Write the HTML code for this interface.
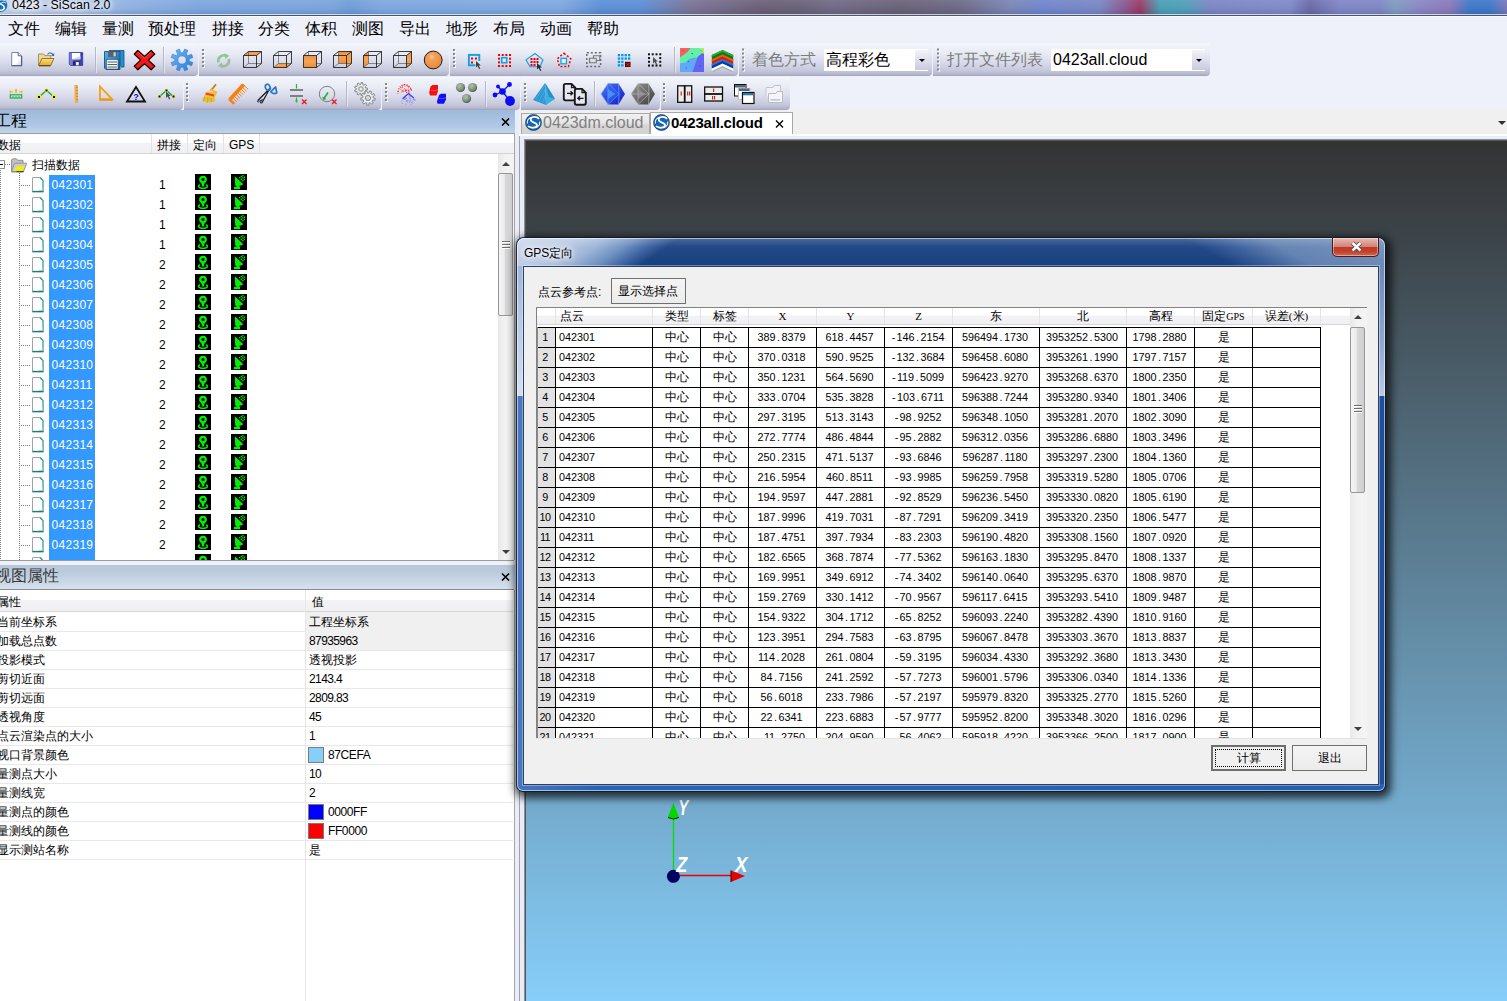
<!DOCTYPE html><html><head><meta charset="utf-8"><title>0423 - SiScan 2.0</title><style>
*{box-sizing:border-box;margin:0;padding:0}
html,body{width:1507px;height:1001px;overflow:hidden;background:#eef0fa;font-family:"Liberation Sans",sans-serif;font-size:12px;color:#000}
.abs{position:absolute}
div,span,svg{position:absolute}
.t{white-space:nowrap;line-height:1}
/* title */
#title{left:0;top:0;width:1507px;height:15px;background:linear-gradient(90deg,#c9d6ec 0px,#b4c7e6 60px,#8fb0e2 130px,#7da6de 200px,#7aa4dd 330px,#6f9cd8 350px,#7ea7de 380px,#80a8df 560px,#5d8fd6 600px,#5d8fd6 640px,#7a7596 690px,#6c6078 760px,#6a6279 800px,#706a86 830px,#6a6278 900px,#6d6a86 960px,#7a86b4 1010px,#6f86cc 1040px,#7a86c4 1100px,#8a5a90 1125px,#9a3a66 1140px,#4a9fb4 1160px,#4f9fb8 1185px,#7c86c4 1210px,#7f8ac8 1290px,#6a6aa8 1310px,#7f86c6 1340px,#8086c4 1380px,#7f9cc0 1395px,#8b86c4 1420px,#8a78b8 1450px,#3f78c8 1470px,#3f78c8 1490px,#7a78b8 1507px)}
#title:after{content:"";position:absolute;left:0;top:0;width:100%;height:14px;background:linear-gradient(180deg,rgba(255,255,255,.08),rgba(255,255,255,0) 60%,rgba(0,0,0,.10))}
#tline0{left:0;top:14px;width:1507px;height:1px;background:rgba(235,240,250,.75)}
#tline{left:0;top:15px;width:1507px;height:1px;background:#4a566c}
#tline2{left:0;top:16px;width:1507px;height:1px;background:#fafbff}
.menu{top:21px;font-size:16px;line-height:16px;white-space:nowrap;letter-spacing:0}
/* toolbars */
.tbg{background:linear-gradient(180deg,#f4f6fc 0%,#e9ebf5 30%,#d9dcea 58%,#c5c8db 84%,#b6b9ce 94%,#9fa2bb 100%);border-radius:0 0 4px 0}
.grip{width:2px;background-image:linear-gradient(180deg,#85858c 0,#85858c 2px,transparent 2px,transparent 4px);background-size:2px 4px;background-repeat:repeat-y}
.grip:after{content:"";position:absolute;left:1px;top:1px;width:2px;height:100%;background-image:linear-gradient(180deg,#fff 0,#fff 2px,transparent 2px,transparent 4px);background-size:2px 4px;background-repeat:repeat-y;z-index:-1}
.sep{width:1px;background:#b7b8c4}
.sep:after{content:"";position:absolute;left:1px;top:0;width:1px;height:100%;background:rgba(255,255,255,.45)}
.combo{background:#fff;height:22px;top:49px}
.cbtn{top:1px;width:13px;height:20px;background:linear-gradient(180deg,#f2f3fa,#c9cbdd);}
.cbtn:after{content:"";position:absolute;left:4px;top:9px;border-left:3px solid transparent;border-right:3px solid transparent;border-top:3px solid #000}
/* dock */
.dockhdr{left:0;width:515px;background:linear-gradient(180deg,#9fb9da 0%,#a5bfdf 30%,#b1c9e5 72%,#c1d4ea 100%)}
.hx{width:9px;height:8px}
.lvh{background:linear-gradient(180deg,#fff 0%,#fff 45%,#f3f3f5 50%,#f0f0f2 100%)}
.row-sel{left:49px;width:46px;height:20px;background:#3399ff}
.rt{font-size:12px;line-height:12px;white-space:nowrap}
.sbtrack{background:linear-gradient(90deg,#e8e8e8,#f2f2f2 40%,#f4f4f4)}
.thumb{border:1px solid #979797;border-radius:2px;background:linear-gradient(90deg,#f4f4f4 0%,#ededed 40%,#d8d8da 50%,#cfcfd1 100%)}
.gripm{width:8px;height:1px;background:#6e6e6e;box-shadow:0 1px 0 #fff}
.c{font-family:"Liberation Sans",sans-serif;font-size:10.8px;line-height:11px;white-space:nowrap;text-align:center}.c i{display:inline-block;position:static;width:6px;text-align:center;font-style:normal}.ls{font-family:"Liberation Serif",serif;font-size:11px}</style></head><body><div id="title"></div><div id="tline0"></div><div id="tline"></div><div id="tline2"></div><svg style="left:-7px;top:-2px" width="15" height="15" viewBox="0 0 15 15"><circle cx="7.500" cy="7.200" r="6.800" fill="#1470c0"/><path d="M11.800 2.500c-2-2-6.500-1-6 1.500s5.500 2.500 5.500 5.500-4.500 3.500-7 1.500" fill="none" stroke="#fff" stroke-width="1.500"/><path d="M12.800 5c-1.500-1-3.500-1-4.500 0" fill="none" stroke="#fff" stroke-width="1"/></svg><div class="t" style="left:12px;top:-2px;font-size:12.4px;line-height:14px;text-shadow:0 0 6px #fff,0 0 4px #fff,0 0 9px #fff">0423 - SiScan 2.0</div><div class="menu" style="left:8px">文件</div><div class="menu" style="left:55px">编辑</div><div class="menu" style="left:102px">量测</div><div class="menu" style="left:148px">预处理</div><div class="menu" style="left:212px">拼接</div><div class="menu" style="left:258px">分类</div><div class="menu" style="left:305px">体积</div><div class="menu" style="left:352px">测图</div><div class="menu" style="left:399px">导出</div><div class="menu" style="left:446px">地形</div><div class="menu" style="left:493px">布局</div><div class="menu" style="left:540px">动画</div><div class="menu" style="left:587px">帮助</div><div class="tbg" style="left:0px;top:43px;width:198px;height:33px"></div><div class="tbg" style="left:199px;top:43px;width:250px;height:33px"></div><div class="tbg" style="left:450px;top:43px;width:288px;height:33px"></div><div class="tbg" style="left:739px;top:43px;width:193px;height:33px"></div><div class="tbg" style="left:933px;top:43px;width:277px;height:33px"></div><div class="tbg" style="left:0px;top:77px;width:183px;height:33px"></div><div class="tbg" style="left:184px;top:77px;width:197px;height:33px"></div><div class="tbg" style="left:382px;top:77px;width:138px;height:33px"></div><div class="tbg" style="left:521px;top:77px;width:139px;height:33px"></div><div class="tbg" style="left:661px;top:77px;width:129px;height:33px"></div><div class="sep" style="left:95px;top:47px;height:26px"></div><div class="sep" style="left:163px;top:47px;height:26px"></div><div class="sep" style="left:674px;top:47px;height:26px"></div><div class="sep" style="left:346px;top:81px;height:26px"></div><div class="sep" style="left:485px;top:81px;height:26px"></div><div class="sep" style="left:594px;top:81px;height:26px"></div><div class="t" style="left:752px;top:52px;font-size:16px;color:#7d7d7d">着色方式</div><div class="combo" style="left:824px;width:104px"><div class="t" style="left:2px;top:3px;font-size:16px">高程彩色</div><div class="cbtn" style="left:91px"></div></div><div class="t" style="left:947px;top:52px;font-size:16px;color:#7d7d7d">打开文件列表</div><div class="combo" style="left:1051px;width:154px"><div class="t" style="left:2px;top:3px;font-size:16px">0423all.cloud</div><div class="cbtn" style="left:141px"></div></div><svg style="left:0;top:42px" width="1507" height="70" viewBox="0 42 1507 70"><defs><linearGradient id="og" x1="0" y1="0" x2="0" y2="1"><stop offset="0" stop-color="#f09038"/><stop offset=".5" stop-color="#f4a458"/><stop offset="1" stop-color="#ee8c30"/></linearGradient><radialGradient id="sg" cx=".42" cy=".32" r=".7"><stop offset="0" stop-color="#fbc898"/><stop offset=".25" stop-color="#f4a058"/><stop offset="1" stop-color="#e88838"/></radialGradient><linearGradient id="fg" x1="0" y1="0" x2="1" y2="1"><stop offset="0" stop-color="#fff"/><stop offset=".6" stop-color="#fff"/><stop offset="1" stop-color="#c8d0e8"/></linearGradient><linearGradient id="sv" x1="0" y1="0" x2="1" y2="0"><stop offset="0" stop-color="#8a8ae6"/><stop offset=".5" stop-color="#5050c8"/><stop offset="1" stop-color="#3c3cae"/></linearGradient><linearGradient id="sa" x1="0" y1="0" x2="1" y2="1"><stop offset="0" stop-color="#58b8e8"/><stop offset=".5" stop-color="#2a86c4"/><stop offset="1" stop-color="#1a5c96"/></linearGradient><linearGradient id="fo" x1="0" y1="0" x2="0" y2="1"><stop offset="0" stop-color="#fbe08a"/><stop offset="1" stop-color="#eda820"/></linearGradient><linearGradient id="gr" x1="0" y1="0" x2="1" y2="1"><stop offset="0" stop-color="#6cb8f4"/><stop offset="1" stop-color="#2a7cd4"/></linearGradient><radialGradient id="gs" cx=".4" cy=".35" r=".7"><stop offset="0" stop-color="#c4c4c4"/><stop offset=".6" stop-color="#8a8a8a"/><stop offset="1" stop-color="#484848"/></radialGradient><linearGradient id="py" x1="0" y1="0" x2="1" y2="0"><stop offset="0" stop-color="#2c9ad8"/><stop offset=".55" stop-color="#48b4e4"/><stop offset="1" stop-color="#2890c8"/></linearGradient><linearGradient id="bp" x1="0" y1="0" x2="1" y2="1"><stop offset="0" stop-color="#4a7af0"/><stop offset=".5" stop-color="#2a48e0"/><stop offset="1" stop-color="#1818c8"/></linearGradient><linearGradient id="gp" x1="0" y1="0" x2="1" y2="1"><stop offset="0" stop-color="#9a9a9a"/><stop offset=".5" stop-color="#6a6a6a"/><stop offset="1" stop-color="#3c3c3c"/></linearGradient></defs><rect x="203" y="50" width="2" height="2" fill="#fff"/><rect x="202" y="49" width="2" height="2" fill="#85858e"/><rect x="203" y="54" width="2" height="2" fill="#fff"/><rect x="202" y="53" width="2" height="2" fill="#85858e"/><rect x="203" y="58" width="2" height="2" fill="#fff"/><rect x="202" y="57" width="2" height="2" fill="#85858e"/><rect x="203" y="62" width="2" height="2" fill="#fff"/><rect x="202" y="61" width="2" height="2" fill="#85858e"/><rect x="203" y="66" width="2" height="2" fill="#fff"/><rect x="202" y="65" width="2" height="2" fill="#85858e"/><rect x="454" y="50" width="2" height="2" fill="#fff"/><rect x="453" y="49" width="2" height="2" fill="#85858e"/><rect x="454" y="54" width="2" height="2" fill="#fff"/><rect x="453" y="53" width="2" height="2" fill="#85858e"/><rect x="454" y="58" width="2" height="2" fill="#fff"/><rect x="453" y="57" width="2" height="2" fill="#85858e"/><rect x="454" y="62" width="2" height="2" fill="#fff"/><rect x="453" y="61" width="2" height="2" fill="#85858e"/><rect x="454" y="66" width="2" height="2" fill="#fff"/><rect x="453" y="65" width="2" height="2" fill="#85858e"/><rect x="743" y="49.5" width="2" height="2" fill="#fff"/><rect x="742" y="48.5" width="2" height="2" fill="#85858e"/><rect x="743" y="53.5" width="2" height="2" fill="#fff"/><rect x="742" y="52.5" width="2" height="2" fill="#85858e"/><rect x="743" y="57.5" width="2" height="2" fill="#fff"/><rect x="742" y="56.5" width="2" height="2" fill="#85858e"/><rect x="743" y="61.5" width="2" height="2" fill="#fff"/><rect x="742" y="60.5" width="2" height="2" fill="#85858e"/><rect x="743" y="65.5" width="2" height="2" fill="#fff"/><rect x="742" y="64.5" width="2" height="2" fill="#85858e"/><rect x="743" y="69.5" width="2" height="2" fill="#fff"/><rect x="742" y="68.5" width="2" height="2" fill="#85858e"/><rect x="938" y="49.5" width="2" height="2" fill="#fff"/><rect x="937" y="48.5" width="2" height="2" fill="#85858e"/><rect x="938" y="53.5" width="2" height="2" fill="#fff"/><rect x="937" y="52.5" width="2" height="2" fill="#85858e"/><rect x="938" y="57.5" width="2" height="2" fill="#fff"/><rect x="937" y="56.5" width="2" height="2" fill="#85858e"/><rect x="938" y="61.5" width="2" height="2" fill="#fff"/><rect x="937" y="60.5" width="2" height="2" fill="#85858e"/><rect x="938" y="65.5" width="2" height="2" fill="#fff"/><rect x="937" y="64.5" width="2" height="2" fill="#85858e"/><rect x="938" y="69.5" width="2" height="2" fill="#fff"/><rect x="937" y="68.5" width="2" height="2" fill="#85858e"/><rect x="187" y="84" width="2" height="2" fill="#fff"/><rect x="186" y="83" width="2" height="2" fill="#85858e"/><rect x="187" y="88" width="2" height="2" fill="#fff"/><rect x="186" y="87" width="2" height="2" fill="#85858e"/><rect x="187" y="92" width="2" height="2" fill="#fff"/><rect x="186" y="91" width="2" height="2" fill="#85858e"/><rect x="187" y="96" width="2" height="2" fill="#fff"/><rect x="186" y="95" width="2" height="2" fill="#85858e"/><rect x="187" y="100" width="2" height="2" fill="#fff"/><rect x="186" y="99" width="2" height="2" fill="#85858e"/><rect x="386" y="84" width="2" height="2" fill="#fff"/><rect x="385" y="83" width="2" height="2" fill="#85858e"/><rect x="386" y="88" width="2" height="2" fill="#fff"/><rect x="385" y="87" width="2" height="2" fill="#85858e"/><rect x="386" y="92" width="2" height="2" fill="#fff"/><rect x="385" y="91" width="2" height="2" fill="#85858e"/><rect x="386" y="96" width="2" height="2" fill="#fff"/><rect x="385" y="95" width="2" height="2" fill="#85858e"/><rect x="386" y="100" width="2" height="2" fill="#fff"/><rect x="385" y="99" width="2" height="2" fill="#85858e"/><rect x="525" y="84" width="2" height="2" fill="#fff"/><rect x="524" y="83" width="2" height="2" fill="#85858e"/><rect x="525" y="88" width="2" height="2" fill="#fff"/><rect x="524" y="87" width="2" height="2" fill="#85858e"/><rect x="525" y="92" width="2" height="2" fill="#fff"/><rect x="524" y="91" width="2" height="2" fill="#85858e"/><rect x="525" y="96" width="2" height="2" fill="#fff"/><rect x="524" y="95" width="2" height="2" fill="#85858e"/><rect x="525" y="100" width="2" height="2" fill="#fff"/><rect x="524" y="99" width="2" height="2" fill="#85858e"/><rect x="664" y="84" width="2" height="2" fill="#fff"/><rect x="663" y="83" width="2" height="2" fill="#85858e"/><rect x="664" y="88" width="2" height="2" fill="#fff"/><rect x="663" y="87" width="2" height="2" fill="#85858e"/><rect x="664" y="92" width="2" height="2" fill="#fff"/><rect x="663" y="91" width="2" height="2" fill="#85858e"/><rect x="664" y="96" width="2" height="2" fill="#fff"/><rect x="663" y="95" width="2" height="2" fill="#85858e"/><rect x="664" y="100" width="2" height="2" fill="#fff"/><rect x="663" y="99" width="2" height="2" fill="#85858e"/><path d="M11.700 52.500h6.500l3.300 3.300v9.700h-9.800z" fill="url(#fg)" stroke="#7888a8" stroke-width="1"/><path d="M11.500 65.700h10.300M21.700 56v9.500" stroke="#48587a" stroke-width="1.100" fill="none"/><path d="M18.200 52.500v3.300h3.300" fill="#e8ecf6" stroke="#48587a" stroke-width=".9"/><path d="M38.500 65.300v-11.300h5l1.200 1.600h6v3.400" fill="#ecd898" stroke="#a08850" stroke-width=".9"/><path d="M38.700 65.500l3.200-7h12l-3.200 7z" fill="url(#fo)" stroke="#8a6a20" stroke-width=".9"/><path d="M39 65.800h11.500" stroke="#4a3a10" stroke-width="1"/><path d="M47.500 54.500c1.500-2.200 4-2.200 5.500.300" fill="none" stroke="#5078c0" stroke-width="1.200"/><path d="M54.300 53l-.3 3.300-3-.8z" fill="#3a62b0"/><path d="M69.300 52.500h13.400v13h-12.200l-1.200-1.200z" fill="url(#sv)" stroke="#3838a0" stroke-width=".8"/><rect x="72" y="53" width="8.300" height="6.300" fill="#fff"/><path d="M72 59.300h8.300v-3z" fill="#d0d4e8"/><rect x="73" y="61.300" width="6.500" height="4" fill="#26265a"/><rect x="75.800" y="62" width="3" height="3.300" fill="#f0f0f8"/><rect x="81.200" y="53.500" width=".9" height="1.200" fill="#26265a"/><path d="M109 50.500h15v16.500h-3" fill="#2a8ccc" stroke="#1a5c96" stroke-width=".9"/><path d="M104.500 51.500h15.500v18h-14l-1.500-1.500z" fill="url(#sa)" stroke="#1a5080" stroke-width=".9"/><rect x="108" y="51.500" width="9" height="5.500" fill="#5a6470"/><rect x="113.500" y="52.300" width="2.300" height="4" fill="#c8d0d8"/><rect x="106.500" y="59.500" width="11.500" height="9.500" fill="#f6f8fa" stroke="#1a5080" stroke-width=".6"/><path d="M107.500 62h9.500M107.500 64.500h9.500M107.500 67h9.500" stroke="#5a5a5a" stroke-width="1.200"/><path d="M137.800 50.500l6.700 6 6.700-6 3.600 3.600-6.400 6 6.400 6-3.600 3.600-6.700-6-6.700 6-3.600-3.600 6.400-6-6.400-6z" fill="#f01818" stroke="#180000" stroke-width="1.300" stroke-linejoin="round"/><path d="M137.800 52l6.700 6 6.700-6" stroke="#ff7070" stroke-width="1" fill="none" opacity=".7"/><path d="M189.23 61.03 L192.89 62.61 L191.55 65.85 L187.84 64.38 L186.38 65.84 L187.85 69.55 L184.61 70.89 L183.03 67.23 L180.97 67.23 L179.39 70.89 L176.15 69.55 L177.62 65.84 L176.16 64.38 L172.45 65.85 L171.11 62.61 L174.77 61.03 L174.77 58.97 L171.11 57.39 L172.45 54.15 L176.16 55.62 L177.62 54.16 L176.15 50.45 L179.39 49.11 L180.97 52.77 L183.03 52.77 L184.61 49.11 L187.85 50.45 L186.38 54.16 L187.84 55.62 L191.55 54.15 L192.89 57.39 L189.23 58.97Z M186.10 60.00A4.1 4.1 0 1 0 177.90 60.00A4.1 4.1 0 1 0 186.10 60.00Z" fill="url(#gr)" fill-rule="evenodd" stroke="#3a80d0" stroke-width="0.6" stroke-linejoin="round"/><path d="M218.500 62.500a5.600 5.600 0 0 1 8-6.500" fill="none" stroke="#8cc890" stroke-width="2.600"/><path d="M224.500 53.200l4.800 2.600-4 3.200z" fill="#8cc890"/><path d="M228.800 59a5.600 5.600 0 0 1-8 6.500" fill="none" stroke="#a4b8a4" stroke-width="2.600"/><path d="M222.800 68.300l-4.800-2.600 4-3.200z" fill="#98c098"/><polygon points="243.5,55.5 248.5,51.5 261.5,51.5 256.5,55.5" fill="url(#og)"/><path d="M248.5 51.5V63.5H261.5M243.5 67.5L248.5 63.5" stroke="#4a4a4a" stroke-width=".6" fill="none"/><path d="M243.5 55.5H256.5V67.5H243.5Z M243.5 55.5L248.5 51.5H261.5V63.5L256.5 67.5 M256.5 55.5L261.5 51.5" stroke="#1c1c1c" stroke-width=".85" fill="none" stroke-linejoin="round"/><polygon points="273.5,67.5 278.5,63.5 291.5,63.5 286.5,67.5" fill="url(#og)"/><path d="M278.5 51.5V63.5H291.5M273.5 67.5L278.5 63.5" stroke="#4a4a4a" stroke-width=".6" fill="none"/><path d="M273.5 55.5H286.5V67.5H273.5Z M273.5 55.5L278.5 51.5H291.5V63.5L286.5 67.5 M286.5 55.5L291.5 51.5" stroke="#1c1c1c" stroke-width=".85" fill="none" stroke-linejoin="round"/><path d="M308.5 51.5V63.5H321.5M303.5 67.5L308.5 63.5" stroke="#4a4a4a" stroke-width=".6" fill="none"/><polygon points="303.5,55.5 316.5,55.5 316.5,67.5 303.5,67.5" fill="url(#og)"/><path d="M303.5 55.5H316.5V67.5H303.5Z M303.5 55.5L308.5 51.5H321.5V63.5L316.5 67.5 M316.5 55.5L321.5 51.5" stroke="#1c1c1c" stroke-width=".85" fill="none" stroke-linejoin="round"/><polygon points="338.5,51.5 351.5,51.5 351.5,63.5 338.5,63.5" fill="url(#og)"/><polygon points="346.5,55.5 351.5,51.5 351.5,63.5 346.5,67.5" fill="#f0a050" opacity=".8"/><path d="M338.5 51.5V63.5H351.5M333.5 67.5L338.5 63.5" stroke="#4a4a4a" stroke-width=".6" fill="none"/><path d="M333.5 55.5H346.5V67.5H333.5Z M333.5 55.5L338.5 51.5H351.5V63.5L346.5 67.5 M346.5 55.5L351.5 51.5" stroke="#1c1c1c" stroke-width=".85" fill="none" stroke-linejoin="round"/><polygon points="363.5,55.5 368.5,51.5 368.5,63.5 363.5,67.5" fill="url(#og)"/><path d="M368.5 51.5V63.5H381.5M363.5 67.5L368.5 63.5" stroke="#4a4a4a" stroke-width=".6" fill="none"/><path d="M363.5 55.5H376.5V67.5H363.5Z M363.5 55.5L368.5 51.5H381.5V63.5L376.5 67.5 M376.5 55.5L381.5 51.5" stroke="#1c1c1c" stroke-width=".85" fill="none" stroke-linejoin="round"/><polygon points="406.5,55.5 411.5,51.5 411.5,63.5 406.5,67.5" fill="url(#og)"/><path d="M398.5 51.5V63.5H411.5M393.5 67.5L398.5 63.5" stroke="#4a4a4a" stroke-width=".6" fill="none"/><path d="M393.5 55.5H406.5V67.5H393.5Z M393.5 55.5L398.5 51.5H411.5V63.5L406.5 67.5 M406.5 55.5L411.5 51.5" stroke="#1c1c1c" stroke-width=".85" fill="none" stroke-linejoin="round"/><circle cx="433.200" cy="60" r="8.900" fill="url(#sg)" stroke="#1c1c1c" stroke-width="1"/><rect x="468.900" y="54.900" width="10.400" height="10.400" fill="none" stroke="#10a0e4" stroke-width="1.900"/><rect x="471" y="57.5" width="2" height="2" fill="#f00000"/><rect x="475" y="57.5" width="2" height="2" fill="#f00000"/><rect x="471" y="61.5" width="2" height="2" fill="#f00000"/><rect x="475.500" y="61" width="5.500" height="6" fill="#dfe1ee"/><path d="M476 61l0 6.5 1.6-1.500 1.500 3 1.200-.600-1.500-3 2.200 0z" fill="#404040"/><rect x="498.00" y="54.00" width="2" height="2" fill="#f00000"/><rect x="498.00" y="57.67" width="2" height="2" fill="#f00000"/><rect x="498.00" y="61.34" width="2" height="2" fill="#f00000"/><rect x="498.00" y="65.01" width="2" height="2" fill="#f00000"/><rect x="501.67" y="54.00" width="2" height="2" fill="#f00000"/><rect x="501.67" y="65.01" width="2" height="2" fill="#f00000"/><rect x="505.34" y="54.00" width="2" height="2" fill="#f00000"/><rect x="505.34" y="65.01" width="2" height="2" fill="#f00000"/><rect x="509.01" y="54.00" width="2" height="2" fill="#f00000"/><rect x="509.01" y="57.67" width="2" height="2" fill="#f00000"/><rect x="509.01" y="61.34" width="2" height="2" fill="#f00000"/><rect x="509.01" y="65.01" width="2" height="2" fill="#f00000"/><rect x="501.700" y="57.700" width="5" height="5" fill="#e0f0fc" stroke="#10a0e4" stroke-width="1.600"/><path d="M535 53.500l8 6.300-3 6.900h-10l-4-6.900z" fill="none" stroke="#10a0e8" stroke-width="1.100"/><rect x="530.5" y="58" width="2" height="2" fill="#f00000"/><rect x="530.5" y="61" width="2" height="2" fill="#f00000"/><rect x="530.5" y="64" width="2" height="2" fill="#f00000"/><rect x="533.5" y="58" width="2" height="2" fill="#f00000"/><rect x="533.5" y="61" width="2" height="2" fill="#f00000"/><rect x="533.5" y="64" width="2" height="2" fill="#f00000"/><rect x="536.5" y="58" width="2" height="2" fill="#f00000"/><rect x="536.5" y="61" width="2" height="2" fill="#f00000"/><path d="M537 63l0 6.5 1.6-1.500 1.500 3 1.200-.600-1.500-3 2.200 0z" fill="#303030"/><path d="M564 53.300l6.800 5.500-2.400 7.800h-8.800l-2.400-7.800z" fill="none" stroke="#f00000" stroke-width="1.500" stroke-dasharray="2 1.800"/><rect x="561" y="58.300" width="5.500" height="5.500" fill="#e0f0fc" stroke="#10a0e8" stroke-width="1.300"/><rect x="586.800" y="52.800" width="13.800" height="13.800" fill="none" stroke="#6c6c6c" stroke-width="1.500" stroke-dasharray="2 2"/><path d="M589.500 62.800v-4.500h4v-2.500h6.300v4.700h-3.500v2.300z" fill="none" stroke="#787878" stroke-width="1.100"/><path d="M593.500 58.300h2.800v2.200" fill="none" stroke="#787878" stroke-width="1"/><rect x="617.8" y="54.0" width="2.300" height="2.300" fill="#0098e8"/><rect x="617.8" y="57.4" width="2.300" height="2.300" fill="#0098e8"/><rect x="617.8" y="60.8" width="2.300" height="2.300" fill="#0098e8"/><rect x="617.8" y="64.2" width="2.300" height="2.300" fill="#0098e8"/><rect x="621.2" y="54.0" width="2.300" height="2.300" fill="#0098e8"/><rect x="621.2" y="57.4" width="2.300" height="2.300" fill="#0098e8"/><rect x="621.2" y="60.8" width="2.300" height="2.300" fill="#0098e8"/><rect x="621.2" y="64.2" width="2.300" height="2.300" fill="#0098e8"/><rect x="624.6" y="54.0" width="2.300" height="2.300" fill="#0098e8"/><rect x="624.6" y="57.4" width="2.300" height="2.300" fill="#0098e8"/><rect x="628.0" y="54.0" width="2.300" height="2.300" fill="#0098e8"/><rect x="628.0" y="57.4" width="2.300" height="2.300" fill="#0098e8"/><rect x="625" y="61.800" width="5.500" height="5.200" fill="#101010"/><path d="M626 62.800l3.500 3.500m0-3.500l-3.500 3.500" stroke="#f00000" stroke-width="1.400"/><rect x="648.00" y="53.30" width="2" height="2" fill="#101010"/><rect x="648.00" y="57.05" width="2" height="2" fill="#101010"/><rect x="648.00" y="60.80" width="2" height="2" fill="#101010"/><rect x="648.00" y="64.55" width="2" height="2" fill="#101010"/><rect x="651.75" y="53.30" width="2" height="2" fill="#101010"/><rect x="651.75" y="64.55" width="2" height="2" fill="#101010"/><rect x="655.50" y="53.30" width="2" height="2" fill="#101010"/><rect x="655.50" y="64.55" width="2" height="2" fill="#101010"/><rect x="659.25" y="53.30" width="2" height="2" fill="#101010"/><rect x="659.25" y="57.05" width="2" height="2" fill="#101010"/><rect x="659.25" y="60.80" width="2" height="2" fill="#101010"/><rect x="659.25" y="64.55" width="2" height="2" fill="#101010"/><path d="M653 57l0 6.5 1.6-1.500 1.500 3 1.200-.600-1.500-3 2.200 0z" fill="#505050"/><g><rect x="680" y="48" width="24" height="24" fill="#62f0a8"/><path d="M680 48h10.500l-3 4-7.500 5.500z" fill="#f86060"/><path d="M699.500 48h4.500v5.500l-3-1z" fill="#a8f060"/><path d="M680 63.500l5.500-1 3.500-3.500 5.500-1.500 3 1-4.500 13.500h-13z" fill="#60a8f8"/><path d="M704 53.500v18.500h-11.500l2-6 3-9 4-3.500z" fill="#6464f4"/><path d="M683 50.500l.8.800M692 53l.3 1.200M701 50.500l.8.800M688 61l.500.800M700 65.500l.5.800M686 67.500l.5.800" stroke="#303050" stroke-width=".9"/></g><path d="M712.500 71.300l10-4.600 10 4.600" fill="none" stroke="#a8a8a8" stroke-width="1.400"/><path d="M711.800 68.2L722.500 63.2L733.200 68.2V71.10000000000001L722.500 66.10000000000001L711.800 71.10000000000001z" fill="#ffffff"/><path d="M711.800 64L722.500 59L733.200 64V68.6L722.500 63.6L711.800 68.6z" fill="#0c38a8"/><path d="M711.800 64L722.500 59L733.200 64V66L722.500 61L711.800 66z" fill="#2a74dc"/><path d="M711.800 59.5L722.500 54.5L733.200 59.5V64.1L722.500 59.1L711.800 64.1z" fill="#d02400"/><path d="M711.800 59.5L722.500 54.5L733.200 59.5V61.5L722.500 56.5L711.800 61.5z" fill="#f85818"/><path d="M711.800 55L722.500 50L733.200 55V59.6L722.500 54.6L711.800 59.6z" fill="#0c7810"/><path d="M711.800 55L722.500 50L733.200 55V57L722.500 52L711.800 57z" fill="#2cac30"/><path d="M10.300 90.500v2.800M10.300 91.800h2.500M21.700 90.500v2.800M21.700 91.800h-2.500" stroke="#f8b400" stroke-width="1.100" fill="none"/><rect x="15.200" y="89" width="1.700" height="3.800" fill="#f8b400"/><rect x="10.300" y="94.800" width="11.400" height="3.200" fill="none" stroke="#18b048" stroke-width="1.200"/><path d="M13 96v1.500M16 96v1.500M19 96v1.500" stroke="#18b048" stroke-width="1"/><path d="M39 97l7.500-6.500 7.500 6.500" fill="none" stroke="#18b048" stroke-width="1.500"/><rect x="37.0" y="95.0" width="4" height="4" fill="#f8f000"/><rect x="38" y="96" width="2" height="2" fill="#101010"/><rect x="44.8" y="88.8" width="3.4" height="3.4" fill="#f8f000"/><rect x="45.5" y="89.5" width="2" height="2" fill="#101010"/><rect x="52.0" y="95.0" width="4" height="4" fill="#f8f000"/><rect x="53" y="96" width="2" height="2" fill="#101010"/><rect x="74" y="85" width="4" height="18" fill="#e4ae58"/><rect x="74" y="85" width="1.200" height="18" fill="#f0c880"/><path d="M76 87.500h2M76 90.500h2M76 93.500h2M76 96.500h2M76 99.500h2" stroke="#c08830" stroke-width=".7"/><path d="M100 86.500v12.700h12z" fill="none" stroke="#f4a010" stroke-width="1.800" stroke-linejoin="miter"/><path d="M99.300 100.300h13.500" stroke="#d88800" stroke-width=".8"/><path d="M136 87l9 14.500h-18z" fill="none" stroke="#101010" stroke-width="1.800" stroke-linejoin="miter"/><text x="136" y="99.500" font-family="Liberation Sans, sans-serif" font-weight="bold" font-size="9" fill="#1010f0" text-anchor="middle">?</text><path d="M159.500 96.500l7-6 7 6" fill="none" stroke="#18b048" stroke-width="1.400"/><rect x="158.0" y="95.0" width="3" height="3" fill="#f8f000"/><rect x="158.5" y="95.5" width="2" height="2" fill="#101010"/><rect x="165.0" y="89.0" width="3" height="3" fill="#f8f000"/><rect x="165.5" y="89.5" width="2" height="2" fill="#101010"/><rect x="172.0" y="95.0" width="3" height="3" fill="#f8f000"/><rect x="172.5" y="95.5" width="2" height="2" fill="#101010"/><path d="M166 91.5l0 6.5 1.6-1.500 1.500 3 1.200-.600-1.500-3 2.200 0z" fill="#505050"/><path d="M216 84.300l-5 6" stroke="#c08818" stroke-width="1.800"/><path d="M211.500 89l-5.500 4-3.800 6.500 1.500 2.800 2-.5 1 1 2-.8 1.500 1 1.800-1.200 1.500.5 2-2.500-1-1.500 1.500-3.500 1.500-3z" fill="#ecc038"/><path d="M205.500 93.500l8.500 2" stroke="#e84040" stroke-width="1.800"/><path d="M205 97l-1.500 4M208 97.500l-.5 5M211 98l.5 4" stroke="#c89820" stroke-width=".8"/><path d="M207 91.500l6 .5" stroke="#f8e080" stroke-width="1"/><path d="M228.300 98.500l13-14.300q1.300-.900 2.300.100l1.400 1.400-14 15.300z" fill="#f88010"/><path d="M230.60 99.30l4.600 4.200M232.22 97.52l4.600 4.200M233.84 95.74l4.600 4.200M235.46 93.96l4.600 4.200M237.08 92.18l4.600 4.200M238.70 90.40l4.600 4.200M240.32 88.62l4.600 4.200M241.94 86.84l4.600 4.200M243.56 85.06l4.600 4.200" stroke="#f88010" stroke-width="1"/><path d="M229 99.300l5 4.600" stroke="#f88010" stroke-width="2.200"/><path d="M257.800 100.500l12.500-12.500M261.800 103l7.500-13.500" stroke="#181818" stroke-width="1.200" fill="none"/><path d="M257.800 100.500q-1 1.500.5 1.500l3-2M261.800 103q-1.800.8-1.200-1l2-3" stroke="#181818" stroke-width=".9" fill="none"/><ellipse cx="267.800" cy="87.300" rx="2.300" ry="3.200" transform="rotate(-25 267.800 87.300)" fill="none" stroke="#2a78c8" stroke-width="1.700"/><path d="M270.800 91.800l4.800-5 1.200 6q-2.800 2-6-1z" fill="none" stroke="#2a78c8" stroke-width="1.700" stroke-linejoin="round"/><path d="M290 90h13M290 96h13" stroke="#606060" stroke-width="1.500"/><path d="M296.500 84v4.500M296.500 97.500v5" stroke="#20c020" stroke-width="1.200"/><path d="M295 100.500l1.500 2 1.500-2" fill="#20c020"/><path d="M302 99.500l4.500 4.500m0-4.500l-4.500 4.500" stroke="#f01020" stroke-width="1.200"/><circle cx="327" cy="94" r="7.700" fill="none" stroke="#808080" stroke-width="1"/><path d="M328 92.500l-4.500 6.500" stroke="#18b038" stroke-width="1.500"/><path d="M322.500 96.500l.5 3.300 3.500-.5z" fill="#18b038"/><path d="M332 99.500l4.500 4.500m0-4.500l-4.500 4.500" stroke="#f01020" stroke-width="1.200"/><path d="M365.58 87.96 L367.44 88.10 L367.44 89.90 L365.58 90.04 L365.18 91.15 L366.51 92.44 L365.35 93.83 L363.84 92.74 L362.82 93.33 L363.01 95.18 L361.23 95.50 L360.77 93.69 L359.61 93.49 L358.57 95.03 L357.00 94.12 L357.81 92.45 L357.05 91.55 L355.26 92.05 L354.64 90.35 L356.34 89.59 L356.34 88.41 L354.64 87.65 L355.26 85.95 L357.05 86.45 L357.81 85.55 L357.00 83.88 L358.57 82.97 L359.61 84.51 L360.77 84.31 L361.23 82.50 L363.01 82.82 L362.82 84.67 L363.84 85.26 L365.35 84.17 L366.51 85.56 L365.18 86.85Z M363.20 89.00A2.2 2.2 0 1 0 358.80 89.00A2.2 2.2 0 1 0 363.20 89.00Z" fill="#e4e8e8" fill-rule="evenodd" stroke="#7a8080" stroke-width="0.9" stroke-linejoin="round"/><path d="M373.20 97.88 L375.29 98.44 L374.88 100.43 L372.74 100.14 L372.06 101.25 L373.30 103.02 L371.71 104.29 L370.26 102.68 L369.02 103.10 L368.83 105.25 L366.80 105.20 L366.72 103.04 L365.51 102.56 L363.98 104.09 L362.45 102.74 L363.78 101.04 L363.16 99.89 L361.00 100.08 L360.70 98.07 L362.81 97.61 L363.07 96.34 L361.30 95.09 L362.36 93.36 L364.28 94.37 L365.30 93.56 L364.74 91.47 L366.66 90.82 L367.48 92.83 L368.78 92.86 L369.70 90.90 L371.59 91.64 L370.93 93.70 L371.90 94.57 L373.87 93.65 L374.84 95.44 L373.00 96.59Z M370.60 98.00A2.6 2.6 0 1 0 365.40 98.00A2.6 2.6 0 1 0 370.60 98.00Z" fill="#e8ecec" fill-rule="evenodd" stroke="#7a8080" stroke-width="0.9" stroke-linejoin="round"/><rect x="400.3" y="88.9" width="1" height="1" fill="#f83030" opacity=".75"/><rect x="401.9" y="87.1" width="1" height="1" fill="#f83030" opacity=".75"/><rect x="404.9" y="90.4" width="1" height="1" fill="#f83030" opacity=".75"/><rect x="397.4" y="92.7" width="1" height="1" fill="#f83030" opacity=".75"/><rect x="401.7" y="90.1" width="1" height="1" fill="#f83030" opacity=".75"/><rect x="408.6" y="92.9" width="1" height="1" fill="#f83030" opacity=".75"/><rect x="408.0" y="90.3" width="1" height="1" fill="#f83030" opacity=".75"/><rect x="405.2" y="89.9" width="1" height="1" fill="#f83030" opacity=".75"/><rect x="406.8" y="85.6" width="1" height="1" fill="#f83030" opacity=".75"/><rect x="404.4" y="85.7" width="1" height="1" fill="#f83030" opacity=".75"/><rect x="405.2" y="90.6" width="1" height="1" fill="#f83030" opacity=".75"/><rect x="407.8" y="88.7" width="1" height="1" fill="#f83030" opacity=".75"/><rect x="402.7" y="90.9" width="1" height="1" fill="#f83030" opacity=".75"/><rect x="408.2" y="90.7" width="1" height="1" fill="#f83030" opacity=".75"/><rect x="408.3" y="86.7" width="1" height="1" fill="#f83030" opacity=".75"/><rect x="408.4" y="86.4" width="1" height="1" fill="#f83030" opacity=".75"/><rect x="401.9" y="85.7" width="1" height="1" fill="#f83030" opacity=".75"/><rect x="402.8" y="84.6" width="1" height="1" fill="#f83030" opacity=".75"/><rect x="406.4" y="91.9" width="1" height="1" fill="#f83030" opacity=".75"/><rect x="401.1" y="91.4" width="1" height="1" fill="#f83030" opacity=".75"/><rect x="408.4" y="92.4" width="1" height="1" fill="#f83030" opacity=".75"/><rect x="405.4" y="89.0" width="1" height="1" fill="#f83030" opacity=".75"/><rect x="404.1" y="88.1" width="1" height="1" fill="#f83030" opacity=".75"/><rect x="401.6" y="87.4" width="1" height="1" fill="#f83030" opacity=".75"/><rect x="405.8" y="84.9" width="1" height="1" fill="#f83030" opacity=".75"/><rect x="407.8" y="85.8" width="1" height="1" fill="#f83030" opacity=".75"/><rect x="410.7" y="89.1" width="1" height="1" fill="#f83030" opacity=".75"/><rect x="405.5" y="90.0" width="1" height="1" fill="#f83030" opacity=".75"/><rect x="410.6" y="89.3" width="1" height="1" fill="#f83030" opacity=".75"/><rect x="408.9" y="91.2" width="1" height="1" fill="#f83030" opacity=".75"/><rect x="406.0" y="90.0" width="1" height="1" fill="#f83030" opacity=".75"/><rect x="408.4" y="89.9" width="1" height="1" fill="#f83030" opacity=".75"/><rect x="402.5" y="90.8" width="1" height="1" fill="#f83030" opacity=".75"/><rect x="410.7" y="89.0" width="1" height="1" fill="#f83030" opacity=".75"/><rect x="397.8" y="90.9" width="1" height="1" fill="#f83030" opacity=".75"/><rect x="403.2" y="89.7" width="1" height="1" fill="#f83030" opacity=".75"/><rect x="400.2" y="87.0" width="1" height="1" fill="#f83030" opacity=".75"/><rect x="406.1" y="92.0" width="1" height="1" fill="#f83030" opacity=".75"/><rect x="404.8" y="90.5" width="1" height="1" fill="#f83030" opacity=".75"/><rect x="406.4" y="89.5" width="1" height="1" fill="#f83030" opacity=".75"/><rect x="410.9" y="89.8" width="1" height="1" fill="#f83030" opacity=".75"/><rect x="404.1" y="84.0" width="1" height="1" fill="#f83030" opacity=".75"/><path d="M398 92q1-7 7-7.500 5 .5 6 5" fill="none" stroke="#f82020" stroke-width="1.100" stroke-dasharray="1.200 1.300"/><rect x="409.4" y="95.3" width="1" height="1" fill="#7070f8" opacity=".65"/><rect x="403.8" y="98.7" width="1" height="1" fill="#7070f8" opacity=".65"/><rect x="409.5" y="96.4" width="1" height="1" fill="#7070f8" opacity=".65"/><rect x="401.6" y="102.8" width="1" height="1" fill="#7070f8" opacity=".65"/><rect x="405.4" y="103.6" width="1" height="1" fill="#7070f8" opacity=".65"/><rect x="413.6" y="98.4" width="1" height="1" fill="#7070f8" opacity=".65"/><rect x="407.4" y="99.7" width="1" height="1" fill="#7070f8" opacity=".65"/><rect x="410.0" y="100.4" width="1" height="1" fill="#7070f8" opacity=".65"/><rect x="408.8" y="100.6" width="1" height="1" fill="#7070f8" opacity=".65"/><rect x="414.2" y="99.6" width="1" height="1" fill="#7070f8" opacity=".65"/><rect x="407.0" y="101.5" width="1" height="1" fill="#7070f8" opacity=".65"/><rect x="404.3" y="97.7" width="1" height="1" fill="#7070f8" opacity=".65"/><rect x="414.7" y="99.7" width="1" height="1" fill="#7070f8" opacity=".65"/><rect x="408.7" y="95.1" width="1" height="1" fill="#7070f8" opacity=".65"/><rect x="406.8" y="100.2" width="1" height="1" fill="#7070f8" opacity=".65"/><rect x="401.3" y="100.5" width="1" height="1" fill="#7070f8" opacity=".65"/><rect x="409.9" y="95.5" width="1" height="1" fill="#7070f8" opacity=".65"/><rect x="409.8" y="99.2" width="1" height="1" fill="#7070f8" opacity=".65"/><rect x="410.5" y="98.2" width="1" height="1" fill="#7070f8" opacity=".65"/><rect x="410.9" y="101.6" width="1" height="1" fill="#7070f8" opacity=".65"/><rect x="410.5" y="103.7" width="1" height="1" fill="#7070f8" opacity=".65"/><rect x="404.5" y="99.1" width="1" height="1" fill="#7070f8" opacity=".65"/><rect x="409.3" y="97.9" width="1" height="1" fill="#7070f8" opacity=".65"/><rect x="406.1" y="97.8" width="1" height="1" fill="#7070f8" opacity=".65"/><rect x="406.2" y="100.4" width="1" height="1" fill="#7070f8" opacity=".65"/><rect x="405.2" y="98.4" width="1" height="1" fill="#7070f8" opacity=".65"/><rect x="409.0" y="101.6" width="1" height="1" fill="#7070f8" opacity=".65"/><rect x="405.3" y="97.0" width="1" height="1" fill="#7070f8" opacity=".65"/><rect x="412.3" y="97.1" width="1" height="1" fill="#7070f8" opacity=".65"/><rect x="403.6" y="98.9" width="1" height="1" fill="#7070f8" opacity=".65"/><rect x="410.8" y="95.9" width="1" height="1" fill="#7070f8" opacity=".65"/><rect x="405.5" y="98.0" width="1" height="1" fill="#7070f8" opacity=".65"/><rect x="412.7" y="98.9" width="1" height="1" fill="#7070f8" opacity=".65"/><rect x="405.7" y="100.9" width="1" height="1" fill="#7070f8" opacity=".65"/><rect x="413.4" y="99.1" width="1" height="1" fill="#7070f8" opacity=".65"/><rect x="408.4" y="96.7" width="1" height="1" fill="#7070f8" opacity=".65"/><rect x="412.3" y="102.5" width="1" height="1" fill="#7070f8" opacity=".65"/><rect x="403.6" y="97.5" width="1" height="1" fill="#7070f8" opacity=".65"/><rect x="412.3" y="100.8" width="1" height="1" fill="#7070f8" opacity=".65"/><path d="M402.500 98.800l6-5.200 5.500 4.500" fill="none" stroke="#3838f0" stroke-width="1.150"/><path d="M430.500 86.500l2-1.500h5.500v6l-1.500 4.500h-6.500l-.8-3z" fill="#f81010"/><path d="M431 90.500h5l2-1" stroke="#ff8080" stroke-width=".6" fill="none"/><path d="M439 95l2-1.300h5v5.500l-2 4.500h-6.500l-.5-2.500z" fill="#1010f8"/><path d="M439 98.500h5l2-1" stroke="#8080ff" stroke-width=".6" fill="none"/><circle cx="460.5" cy="87.5" r="4.600" fill="url(#gs)"/><rect x="458.5" y="85.5" width="1" height="1" fill="#20e020"/><rect x="461.5" y="85.5" width="1" height="1" fill="#20e020"/><rect x="458.5" y="88.5" width="1" height="1" fill="#20e020"/><rect x="461.5" y="88.5" width="1" height="1" fill="#20e020"/><rect x="460.0" y="87.0" width="1" height="1" fill="#20e020"/><circle cx="472.5" cy="87.5" r="4.600" fill="url(#gs)"/><rect x="470.5" y="85.5" width="1" height="1" fill="#20e020"/><rect x="473.5" y="85.5" width="1" height="1" fill="#20e020"/><rect x="470.5" y="88.5" width="1" height="1" fill="#20e020"/><rect x="473.5" y="88.5" width="1" height="1" fill="#20e020"/><rect x="472.0" y="87.0" width="1" height="1" fill="#20e020"/><circle cx="466.5" cy="98.5" r="4.600" fill="url(#gs)"/><rect x="464.5" y="96.5" width="1" height="1" fill="#20e020"/><rect x="467.5" y="96.5" width="1" height="1" fill="#20e020"/><rect x="464.5" y="99.5" width="1" height="1" fill="#20e020"/><rect x="467.5" y="99.5" width="1" height="1" fill="#20e020"/><rect x="466.0" y="98.0" width="1" height="1" fill="#20e020"/><path d="M502.500 91.500L498 86.500M502.500 91.500L509.500 84.500M502.500 91.500L495 95M502.500 91.500L510 101" stroke="#0c0cf0" stroke-width="1.300"/><circle cx="502.500" cy="91.500" r="3.300" fill="#0c0cf0"/><circle cx="510" cy="101" r="4.900" fill="#0c0cf0"/><circle cx="498" cy="86.500" r="1.900" fill="#0c0cf0"/><circle cx="509.500" cy="84.500" r="2.400" fill="#0c0cf0"/><circle cx="495" cy="95" r="2.400" fill="#0c0cf0"/><path d="M545 83l-12 17 13 5z" fill="#2c98d4"/><path d="M545 83l1 22 9-6z" fill="#3cb0e0"/><path d="M545 83l4 14 6 2z" fill="#2a8cc4"/><path d="M536 99l9-14M539 101l6.500-12M542.500 103l3-8" stroke="#58c0ec" stroke-width=".7" opacity=".7"/><path d="M565.500 83.800h6l3.800 3.800v11q0 1.700-1.700 1.700h-8.100q-1.700 0-1.700-1.700v-13.100q0-1.700 1.700-1.700z" fill="#e6e8f2" stroke="#161616" stroke-width="1.850"/><path d="M571.500 84v3.600h3.600" fill="none" stroke="#181818" stroke-width="1.200"/><path d="M576.500 88.800h5.500l3.800 3.800v10.400q0 1.700-1.700 1.700h-7.600q-1.700 0-1.700-1.700v-12.500q0-1.700 1.700-1.700z" fill="#e6e8f2" stroke="#161616" stroke-width="1.850"/><path d="M582 89v3.600h3.600" fill="none" stroke="#181818" stroke-width="1.200"/><path d="M567 93.300h5.500M570.500 91.300l2.200 2-2.200 2" fill="none" stroke="#181818" stroke-width="1.300"/><path d="M583.500 98.300h-5.500M580 96.300l-2.200 2 2.200 2" fill="none" stroke="#181818" stroke-width="1.300"/><path d="M601 94l7-10.500h10.500l6.500 10.500-6.500 10.500h-10.500z" fill="url(#bp)"/><path d="M608 83.500l11 10.500-11 10.500M601 94l7-10.500v21zM619 94l-.5-10.500M619 94l-.5 10.500" fill="none" stroke="#70b0ff" stroke-width=".8" opacity=".85"/><path d="M608 83.500l11 10.500-11 10.500z" fill="#3060f0" opacity=".6"/><path d="M608 89l7.500 5-7.500 5z" fill="#58a0f8" opacity=".7"/><path d="M631 94l7-10.500h10.500l6.500 10.500-6.500 10.500h-10.500z" fill="url(#gp)"/><path d="M638 83.500l11 10.500-11 10.500M631 94l7-10.500v21zM649 94l-.5-10.500M649 94l-.5 10.500M631 94h18" fill="none" stroke="#c8c8c8" stroke-width=".7" opacity=".8"/><path d="M638 89l7.500 5-7.500 5z" fill="#a0a0a0" opacity=".6"/><rect x="677.700" y="85.800" width="14" height="16.500" fill="#ececec" stroke="#101010" stroke-width="1.300"/><path d="M684.700 85.500v17" stroke="#101010" stroke-width="1.800"/><path d="M681.200 91.500v4M687.700 91.500v4M689.700 91.500v4" stroke="#d01818" stroke-width="1.100"/><rect x="704.700" y="87" width="17.800" height="14" fill="#ececec" stroke="#101010" stroke-width="1.300"/><path d="M704.500 94h18" stroke="#101010" stroke-width="1.800"/><path d="M713.600 88.500v3.500M712.600 96v3.500M714.600 96v3.500" stroke="#d01818" stroke-width="1.100"/><rect x="734.500" y="84.500" width="11.500" height="11.500" fill="#fff" stroke="#101010" stroke-width="1"/><rect x="735" y="85" width="10.500" height="2.500" fill="#506878"/><rect x="738.500" y="88.500" width="11.500" height="11" fill="#fff" stroke="#c0c0c0" stroke-width="1"/><rect x="739" y="88.500" width="10.500" height="2.500" fill="#506878"/><rect x="742.500" y="92.500" width="11.500" height="11" fill="#fff" stroke="#101010" stroke-width="1.200"/><rect x="743" y="93" width="10.500" height="2.300" fill="#2080b0"/><rect x="751.500" y="93.300" width="1.500" height="1.500" fill="#e03030"/><path d="M766 96.500v-9h7l1-2h6.500v10" fill="#f2f3f8" stroke="#c4c4c8" stroke-width="1"/><path d="M768.500 102.500v-9h7.500l1-2h5.500v11z" fill="#f4f5fa" stroke="#bcbcc0" stroke-width="1"/><rect x="770.500" y="99" width="9.500" height="1.600" fill="#c4c4e0"/></svg><div class="dockhdr" style="top:110px;height:23px"></div><div style="left:0;top:133px;width:515px;height:1px;background:#9a9da4"></div><div class="t" style="left:-5px;top:113px;font-size:16px;line-height:16px">工程</div><svg class="hx" style="left:501px;top:118px" width="9" height="8" viewBox="0 0 9 8"><path d="M1 0.5L8 7.5M8 0.5L1 7.5" stroke="#000" stroke-width="1.6" fill="none"/></svg><div style="left:0;top:134px;width:515px;height:427px;background:#fff;border-right:1px solid #a6a6a6;border-bottom:1px solid #a0a0a0"></div><div class="lvh" style="left:0;top:134px;width:514px;height:19px"></div><div style="left:0;top:153px;width:514px;height:1px;background:#d5d5d5"></div><div style="left:151px;top:134px;width:1px;height:19px;background:#e2e3ea"></div><div style="left:187px;top:134px;width:1px;height:19px;background:#e2e3ea"></div><div style="left:223px;top:134px;width:1px;height:19px;background:#e2e3ea"></div><div style="left:259px;top:134px;width:1px;height:19px;background:#e2e3ea"></div><div class="rt" style="left:-3px;top:139px">数据</div><div class="rt" style="left:157px;top:139px">拼接</div><div class="rt" style="left:193px;top:139px">定向</div><div class="rt" style="left:229px;top:139px">GPS</div><div class="rt" style="left:32px;top:159px">扫描数据</div><div style="left:-4px;top:160px;width:9px;height:9px;border:1px solid #919191;background:#fff"></div><div style="left:-2px;top:164px;width:5px;height:1px;background:#000"></div><div style="left:0;top:170px;width:1px;height:390px;background-image:linear-gradient(180deg,#808080 1px,transparent 1px);background-size:1px 2px"></div><div style="left:5px;top:164px;width:6px;height:1px;background-image:linear-gradient(90deg,#808080 1px,transparent 1px);background-size:2px 1px"></div><div style="left:19px;top:173px;width:1px;height:387px;background-image:linear-gradient(180deg,#808080 1px,transparent 1px);background-size:1px 2px"></div><svg style="left:10px;top:157px" width="18" height="16" viewBox="10 157 18 16"><path d="M11.500 171.500V160l1-1.200h4l1.200 1.500h5.300v2.700" fill="#c2c2c2" stroke="#8a8a8a" stroke-width=".9"/><path d="M11.500 171.500l3-8.300h12.200l-3.200 8.300z" fill="#cdcdcd" stroke="#8c8c8c" stroke-width=".9"/><path d="M14 170.800l3-4.600h7.800l-2.200 4.600z" fill="#f4f000"/><path d="M16.500 171.600h7" stroke="#202020" stroke-width="1.100"/><path d="M11.300 172h12" stroke="#7a7a7a" stroke-width=".8"/></svg><div style="left:21px;top:185px;width:10px;height:1px;background-image:linear-gradient(90deg,#808080 1px,transparent 1px);background-size:2px 1px"></div><svg style="left:31px;top:176px" width="14" height="17" viewBox="0 0 14 17"><path d="M1.500 15V2q0-.5.5-.5h7l3 3V15z" fill="#fff"/><path d="M1.500 15.300V2q0-.500.500-.500h7" fill="none" stroke="#a2a2a2" stroke-width="1"/><path d="M9 1.500l3 3V15.500" fill="none" stroke="#168a8a" stroke-width="1.100"/><path d="M1.300 15.600H12.500" stroke="#0f8080" stroke-width="1.500"/><path d="M8 14.500h3.300v-3" fill="none" stroke="#c8c8c8" stroke-width="1"/></svg><div class="row-sel" style="top:175px"></div><div class="rt" style="left:51.500px;top:179px;color:#fff;letter-spacing:.3px">042301</div><div class="rt" style="left:159px;top:179px">1</div><svg style="left:195px;top:174px" width="16" height="16" viewBox="0 0 16 16"><rect width="16" height="16" fill="#000"/><path d="M8 1.800a3.900 3.900 0 0 1 3.900 3.900c0 1.800-1.700 3-2.700 4.200v2.600h-2.400v-2.600c-1-1.200-2.700-2.400-2.700-4.200a3.900 3.900 0 0 1 3.900-3.900z" fill="#00f000"/><circle cx="8" cy="5.600" r="1.500" fill="#000"/><path d="M5 11c-2.300.5-2.200 3.300 3 3.300s5.300-2.800 3-3.300" fill="none" stroke="#00f000" stroke-width="1.300"/></svg><svg style="left:231px;top:174px" width="16" height="16" viewBox="0 0 16 16"><rect width="16" height="16" fill="#000"/><path d="M3.800 2.300L12.400 10.300q-4 2.800-8.200 1.300z" fill="#00f000"/><path d="M5.500 11.500l2.800 0 .5 2h-3z" fill="#00f000"/><rect x="3" y="12.800" width="6" height="2.300" fill="#00f000"/><path d="M8.200 3.200l4.500 4.300M9.800 2l4 3.800M11.400 1.200l2.800 2.700" stroke="#00f000" stroke-width="1.150" stroke-dasharray="1.500 .7"/></svg><div style="left:21px;top:205px;width:10px;height:1px;background-image:linear-gradient(90deg,#808080 1px,transparent 1px);background-size:2px 1px"></div><svg style="left:31px;top:196px" width="14" height="17" viewBox="0 0 14 17"><path d="M1.500 15V2q0-.5.5-.5h7l3 3V15z" fill="#fff"/><path d="M1.500 15.300V2q0-.500.500-.500h7" fill="none" stroke="#a2a2a2" stroke-width="1"/><path d="M9 1.500l3 3V15.500" fill="none" stroke="#168a8a" stroke-width="1.100"/><path d="M1.300 15.600H12.500" stroke="#0f8080" stroke-width="1.500"/><path d="M8 14.500h3.300v-3" fill="none" stroke="#c8c8c8" stroke-width="1"/></svg><div class="row-sel" style="top:195px"></div><div class="rt" style="left:51.500px;top:199px;color:#fff;letter-spacing:.3px">042302</div><div class="rt" style="left:159px;top:199px">1</div><svg style="left:195px;top:194px" width="16" height="16" viewBox="0 0 16 16"><rect width="16" height="16" fill="#000"/><path d="M8 1.800a3.900 3.900 0 0 1 3.900 3.900c0 1.800-1.700 3-2.700 4.200v2.600h-2.400v-2.600c-1-1.200-2.700-2.400-2.700-4.200a3.900 3.900 0 0 1 3.900-3.900z" fill="#00f000"/><circle cx="8" cy="5.600" r="1.500" fill="#000"/><path d="M5 11c-2.300.5-2.200 3.300 3 3.300s5.300-2.800 3-3.300" fill="none" stroke="#00f000" stroke-width="1.300"/></svg><svg style="left:231px;top:194px" width="16" height="16" viewBox="0 0 16 16"><rect width="16" height="16" fill="#000"/><path d="M3.800 2.300L12.400 10.300q-4 2.800-8.200 1.300z" fill="#00f000"/><path d="M5.500 11.500l2.800 0 .5 2h-3z" fill="#00f000"/><rect x="3" y="12.800" width="6" height="2.300" fill="#00f000"/><path d="M8.200 3.200l4.500 4.300M9.800 2l4 3.800M11.400 1.200l2.800 2.700" stroke="#00f000" stroke-width="1.150" stroke-dasharray="1.500 .7"/></svg><div style="left:21px;top:225px;width:10px;height:1px;background-image:linear-gradient(90deg,#808080 1px,transparent 1px);background-size:2px 1px"></div><svg style="left:31px;top:216px" width="14" height="17" viewBox="0 0 14 17"><path d="M1.500 15V2q0-.5.5-.5h7l3 3V15z" fill="#fff"/><path d="M1.500 15.300V2q0-.500.500-.500h7" fill="none" stroke="#a2a2a2" stroke-width="1"/><path d="M9 1.500l3 3V15.500" fill="none" stroke="#168a8a" stroke-width="1.100"/><path d="M1.300 15.600H12.500" stroke="#0f8080" stroke-width="1.500"/><path d="M8 14.500h3.300v-3" fill="none" stroke="#c8c8c8" stroke-width="1"/></svg><div class="row-sel" style="top:215px"></div><div class="rt" style="left:51.500px;top:219px;color:#fff;letter-spacing:.3px">042303</div><div class="rt" style="left:159px;top:219px">1</div><svg style="left:195px;top:214px" width="16" height="16" viewBox="0 0 16 16"><rect width="16" height="16" fill="#000"/><path d="M8 1.800a3.900 3.900 0 0 1 3.900 3.900c0 1.800-1.700 3-2.700 4.200v2.600h-2.400v-2.600c-1-1.200-2.700-2.400-2.700-4.200a3.900 3.900 0 0 1 3.900-3.900z" fill="#00f000"/><circle cx="8" cy="5.600" r="1.500" fill="#000"/><path d="M5 11c-2.300.5-2.200 3.300 3 3.300s5.300-2.800 3-3.300" fill="none" stroke="#00f000" stroke-width="1.300"/></svg><svg style="left:231px;top:214px" width="16" height="16" viewBox="0 0 16 16"><rect width="16" height="16" fill="#000"/><path d="M3.800 2.300L12.400 10.300q-4 2.800-8.200 1.300z" fill="#00f000"/><path d="M5.500 11.500l2.800 0 .5 2h-3z" fill="#00f000"/><rect x="3" y="12.800" width="6" height="2.300" fill="#00f000"/><path d="M8.200 3.200l4.500 4.300M9.800 2l4 3.800M11.400 1.200l2.800 2.700" stroke="#00f000" stroke-width="1.150" stroke-dasharray="1.500 .7"/></svg><div style="left:21px;top:245px;width:10px;height:1px;background-image:linear-gradient(90deg,#808080 1px,transparent 1px);background-size:2px 1px"></div><svg style="left:31px;top:236px" width="14" height="17" viewBox="0 0 14 17"><path d="M1.500 15V2q0-.5.5-.5h7l3 3V15z" fill="#fff"/><path d="M1.500 15.300V2q0-.500.500-.500h7" fill="none" stroke="#a2a2a2" stroke-width="1"/><path d="M9 1.500l3 3V15.500" fill="none" stroke="#168a8a" stroke-width="1.100"/><path d="M1.300 15.600H12.500" stroke="#0f8080" stroke-width="1.500"/><path d="M8 14.500h3.300v-3" fill="none" stroke="#c8c8c8" stroke-width="1"/></svg><div class="row-sel" style="top:235px"></div><div class="rt" style="left:51.500px;top:239px;color:#fff;letter-spacing:.3px">042304</div><div class="rt" style="left:159px;top:239px">1</div><svg style="left:195px;top:234px" width="16" height="16" viewBox="0 0 16 16"><rect width="16" height="16" fill="#000"/><path d="M8 1.800a3.900 3.900 0 0 1 3.900 3.900c0 1.800-1.700 3-2.700 4.200v2.600h-2.400v-2.600c-1-1.200-2.700-2.400-2.700-4.200a3.900 3.900 0 0 1 3.900-3.900z" fill="#00f000"/><circle cx="8" cy="5.600" r="1.500" fill="#000"/><path d="M5 11c-2.300.5-2.200 3.300 3 3.300s5.300-2.800 3-3.300" fill="none" stroke="#00f000" stroke-width="1.300"/></svg><svg style="left:231px;top:234px" width="16" height="16" viewBox="0 0 16 16"><rect width="16" height="16" fill="#000"/><path d="M3.800 2.300L12.400 10.300q-4 2.800-8.200 1.300z" fill="#00f000"/><path d="M5.500 11.500l2.800 0 .5 2h-3z" fill="#00f000"/><rect x="3" y="12.800" width="6" height="2.300" fill="#00f000"/><path d="M8.200 3.200l4.500 4.300M9.800 2l4 3.800M11.400 1.200l2.800 2.700" stroke="#00f000" stroke-width="1.150" stroke-dasharray="1.500 .7"/></svg><div style="left:21px;top:265px;width:10px;height:1px;background-image:linear-gradient(90deg,#808080 1px,transparent 1px);background-size:2px 1px"></div><svg style="left:31px;top:256px" width="14" height="17" viewBox="0 0 14 17"><path d="M1.500 15V2q0-.5.5-.5h7l3 3V15z" fill="#fff"/><path d="M1.500 15.300V2q0-.500.500-.500h7" fill="none" stroke="#a2a2a2" stroke-width="1"/><path d="M9 1.500l3 3V15.500" fill="none" stroke="#168a8a" stroke-width="1.100"/><path d="M1.300 15.600H12.500" stroke="#0f8080" stroke-width="1.500"/><path d="M8 14.500h3.300v-3" fill="none" stroke="#c8c8c8" stroke-width="1"/></svg><div class="row-sel" style="top:255px"></div><div class="rt" style="left:51.500px;top:259px;color:#fff;letter-spacing:.3px">042305</div><div class="rt" style="left:159px;top:259px">2</div><svg style="left:195px;top:254px" width="16" height="16" viewBox="0 0 16 16"><rect width="16" height="16" fill="#000"/><path d="M8 1.800a3.900 3.900 0 0 1 3.900 3.900c0 1.800-1.700 3-2.700 4.200v2.600h-2.400v-2.600c-1-1.200-2.700-2.400-2.700-4.200a3.900 3.900 0 0 1 3.900-3.900z" fill="#00f000"/><circle cx="8" cy="5.600" r="1.500" fill="#000"/><path d="M5 11c-2.300.5-2.200 3.300 3 3.300s5.300-2.800 3-3.300" fill="none" stroke="#00f000" stroke-width="1.300"/></svg><svg style="left:231px;top:254px" width="16" height="16" viewBox="0 0 16 16"><rect width="16" height="16" fill="#000"/><path d="M3.800 2.300L12.400 10.300q-4 2.800-8.200 1.300z" fill="#00f000"/><path d="M5.500 11.500l2.800 0 .5 2h-3z" fill="#00f000"/><rect x="3" y="12.800" width="6" height="2.300" fill="#00f000"/><path d="M8.200 3.200l4.500 4.300M9.800 2l4 3.800M11.400 1.200l2.800 2.700" stroke="#00f000" stroke-width="1.150" stroke-dasharray="1.500 .7"/></svg><div style="left:21px;top:285px;width:10px;height:1px;background-image:linear-gradient(90deg,#808080 1px,transparent 1px);background-size:2px 1px"></div><svg style="left:31px;top:276px" width="14" height="17" viewBox="0 0 14 17"><path d="M1.500 15V2q0-.5.5-.5h7l3 3V15z" fill="#fff"/><path d="M1.500 15.300V2q0-.500.500-.500h7" fill="none" stroke="#a2a2a2" stroke-width="1"/><path d="M9 1.500l3 3V15.500" fill="none" stroke="#168a8a" stroke-width="1.100"/><path d="M1.300 15.600H12.500" stroke="#0f8080" stroke-width="1.500"/><path d="M8 14.500h3.300v-3" fill="none" stroke="#c8c8c8" stroke-width="1"/></svg><div class="row-sel" style="top:275px"></div><div class="rt" style="left:51.500px;top:279px;color:#fff;letter-spacing:.3px">042306</div><div class="rt" style="left:159px;top:279px">2</div><svg style="left:195px;top:274px" width="16" height="16" viewBox="0 0 16 16"><rect width="16" height="16" fill="#000"/><path d="M8 1.800a3.900 3.900 0 0 1 3.900 3.900c0 1.800-1.700 3-2.700 4.200v2.600h-2.400v-2.600c-1-1.200-2.700-2.400-2.700-4.200a3.900 3.900 0 0 1 3.900-3.900z" fill="#00f000"/><circle cx="8" cy="5.600" r="1.500" fill="#000"/><path d="M5 11c-2.300.5-2.200 3.300 3 3.300s5.300-2.800 3-3.300" fill="none" stroke="#00f000" stroke-width="1.300"/></svg><svg style="left:231px;top:274px" width="16" height="16" viewBox="0 0 16 16"><rect width="16" height="16" fill="#000"/><path d="M3.800 2.300L12.400 10.300q-4 2.800-8.200 1.300z" fill="#00f000"/><path d="M5.500 11.500l2.800 0 .5 2h-3z" fill="#00f000"/><rect x="3" y="12.800" width="6" height="2.300" fill="#00f000"/><path d="M8.200 3.200l4.500 4.300M9.800 2l4 3.800M11.400 1.200l2.800 2.700" stroke="#00f000" stroke-width="1.150" stroke-dasharray="1.500 .7"/></svg><div style="left:21px;top:305px;width:10px;height:1px;background-image:linear-gradient(90deg,#808080 1px,transparent 1px);background-size:2px 1px"></div><svg style="left:31px;top:296px" width="14" height="17" viewBox="0 0 14 17"><path d="M1.500 15V2q0-.5.5-.5h7l3 3V15z" fill="#fff"/><path d="M1.500 15.300V2q0-.500.500-.500h7" fill="none" stroke="#a2a2a2" stroke-width="1"/><path d="M9 1.500l3 3V15.500" fill="none" stroke="#168a8a" stroke-width="1.100"/><path d="M1.300 15.600H12.500" stroke="#0f8080" stroke-width="1.500"/><path d="M8 14.500h3.300v-3" fill="none" stroke="#c8c8c8" stroke-width="1"/></svg><div class="row-sel" style="top:295px"></div><div class="rt" style="left:51.500px;top:299px;color:#fff;letter-spacing:.3px">042307</div><div class="rt" style="left:159px;top:299px">2</div><svg style="left:195px;top:294px" width="16" height="16" viewBox="0 0 16 16"><rect width="16" height="16" fill="#000"/><path d="M8 1.800a3.900 3.900 0 0 1 3.900 3.900c0 1.800-1.700 3-2.700 4.200v2.600h-2.400v-2.600c-1-1.200-2.700-2.400-2.700-4.200a3.900 3.900 0 0 1 3.900-3.900z" fill="#00f000"/><circle cx="8" cy="5.600" r="1.500" fill="#000"/><path d="M5 11c-2.300.5-2.200 3.300 3 3.300s5.300-2.800 3-3.300" fill="none" stroke="#00f000" stroke-width="1.300"/></svg><svg style="left:231px;top:294px" width="16" height="16" viewBox="0 0 16 16"><rect width="16" height="16" fill="#000"/><path d="M3.800 2.300L12.400 10.300q-4 2.800-8.200 1.300z" fill="#00f000"/><path d="M5.500 11.500l2.800 0 .5 2h-3z" fill="#00f000"/><rect x="3" y="12.800" width="6" height="2.300" fill="#00f000"/><path d="M8.200 3.200l4.500 4.300M9.800 2l4 3.800M11.400 1.200l2.800 2.700" stroke="#00f000" stroke-width="1.150" stroke-dasharray="1.500 .7"/></svg><div style="left:21px;top:325px;width:10px;height:1px;background-image:linear-gradient(90deg,#808080 1px,transparent 1px);background-size:2px 1px"></div><svg style="left:31px;top:316px" width="14" height="17" viewBox="0 0 14 17"><path d="M1.500 15V2q0-.5.5-.5h7l3 3V15z" fill="#fff"/><path d="M1.500 15.300V2q0-.500.500-.500h7" fill="none" stroke="#a2a2a2" stroke-width="1"/><path d="M9 1.500l3 3V15.500" fill="none" stroke="#168a8a" stroke-width="1.100"/><path d="M1.300 15.600H12.500" stroke="#0f8080" stroke-width="1.500"/><path d="M8 14.500h3.300v-3" fill="none" stroke="#c8c8c8" stroke-width="1"/></svg><div class="row-sel" style="top:315px"></div><div class="rt" style="left:51.500px;top:319px;color:#fff;letter-spacing:.3px">042308</div><div class="rt" style="left:159px;top:319px">2</div><svg style="left:195px;top:314px" width="16" height="16" viewBox="0 0 16 16"><rect width="16" height="16" fill="#000"/><path d="M8 1.800a3.900 3.900 0 0 1 3.900 3.900c0 1.800-1.700 3-2.700 4.200v2.600h-2.400v-2.600c-1-1.200-2.700-2.400-2.700-4.200a3.900 3.900 0 0 1 3.900-3.900z" fill="#00f000"/><circle cx="8" cy="5.600" r="1.500" fill="#000"/><path d="M5 11c-2.300.5-2.200 3.300 3 3.300s5.300-2.800 3-3.300" fill="none" stroke="#00f000" stroke-width="1.300"/></svg><svg style="left:231px;top:314px" width="16" height="16" viewBox="0 0 16 16"><rect width="16" height="16" fill="#000"/><path d="M3.800 2.300L12.400 10.300q-4 2.800-8.200 1.300z" fill="#00f000"/><path d="M5.500 11.500l2.800 0 .5 2h-3z" fill="#00f000"/><rect x="3" y="12.800" width="6" height="2.300" fill="#00f000"/><path d="M8.200 3.200l4.500 4.300M9.800 2l4 3.800M11.400 1.200l2.800 2.700" stroke="#00f000" stroke-width="1.150" stroke-dasharray="1.500 .7"/></svg><div style="left:21px;top:345px;width:10px;height:1px;background-image:linear-gradient(90deg,#808080 1px,transparent 1px);background-size:2px 1px"></div><svg style="left:31px;top:336px" width="14" height="17" viewBox="0 0 14 17"><path d="M1.500 15V2q0-.5.5-.5h7l3 3V15z" fill="#fff"/><path d="M1.500 15.300V2q0-.500.500-.500h7" fill="none" stroke="#a2a2a2" stroke-width="1"/><path d="M9 1.500l3 3V15.500" fill="none" stroke="#168a8a" stroke-width="1.100"/><path d="M1.300 15.600H12.500" stroke="#0f8080" stroke-width="1.500"/><path d="M8 14.500h3.300v-3" fill="none" stroke="#c8c8c8" stroke-width="1"/></svg><div class="row-sel" style="top:335px"></div><div class="rt" style="left:51.500px;top:339px;color:#fff;letter-spacing:.3px">042309</div><div class="rt" style="left:159px;top:339px">2</div><svg style="left:195px;top:334px" width="16" height="16" viewBox="0 0 16 16"><rect width="16" height="16" fill="#000"/><path d="M8 1.800a3.900 3.900 0 0 1 3.900 3.900c0 1.800-1.700 3-2.700 4.200v2.600h-2.400v-2.600c-1-1.200-2.700-2.400-2.700-4.200a3.900 3.900 0 0 1 3.900-3.900z" fill="#00f000"/><circle cx="8" cy="5.600" r="1.500" fill="#000"/><path d="M5 11c-2.300.5-2.200 3.300 3 3.300s5.300-2.800 3-3.300" fill="none" stroke="#00f000" stroke-width="1.300"/></svg><svg style="left:231px;top:334px" width="16" height="16" viewBox="0 0 16 16"><rect width="16" height="16" fill="#000"/><path d="M3.800 2.300L12.400 10.300q-4 2.800-8.200 1.300z" fill="#00f000"/><path d="M5.500 11.500l2.800 0 .5 2h-3z" fill="#00f000"/><rect x="3" y="12.800" width="6" height="2.300" fill="#00f000"/><path d="M8.200 3.200l4.500 4.300M9.800 2l4 3.800M11.400 1.200l2.800 2.700" stroke="#00f000" stroke-width="1.150" stroke-dasharray="1.500 .7"/></svg><div style="left:21px;top:365px;width:10px;height:1px;background-image:linear-gradient(90deg,#808080 1px,transparent 1px);background-size:2px 1px"></div><svg style="left:31px;top:356px" width="14" height="17" viewBox="0 0 14 17"><path d="M1.500 15V2q0-.5.5-.5h7l3 3V15z" fill="#fff"/><path d="M1.500 15.300V2q0-.500.500-.500h7" fill="none" stroke="#a2a2a2" stroke-width="1"/><path d="M9 1.500l3 3V15.500" fill="none" stroke="#168a8a" stroke-width="1.100"/><path d="M1.300 15.600H12.500" stroke="#0f8080" stroke-width="1.500"/><path d="M8 14.500h3.300v-3" fill="none" stroke="#c8c8c8" stroke-width="1"/></svg><div class="row-sel" style="top:355px"></div><div class="rt" style="left:51.500px;top:359px;color:#fff;letter-spacing:.3px">042310</div><div class="rt" style="left:159px;top:359px">2</div><svg style="left:195px;top:354px" width="16" height="16" viewBox="0 0 16 16"><rect width="16" height="16" fill="#000"/><path d="M8 1.800a3.900 3.900 0 0 1 3.900 3.900c0 1.800-1.700 3-2.700 4.200v2.600h-2.400v-2.600c-1-1.200-2.700-2.400-2.700-4.200a3.900 3.900 0 0 1 3.900-3.900z" fill="#00f000"/><circle cx="8" cy="5.600" r="1.500" fill="#000"/><path d="M5 11c-2.300.5-2.200 3.300 3 3.300s5.300-2.800 3-3.300" fill="none" stroke="#00f000" stroke-width="1.300"/></svg><svg style="left:231px;top:354px" width="16" height="16" viewBox="0 0 16 16"><rect width="16" height="16" fill="#000"/><path d="M3.800 2.300L12.400 10.300q-4 2.800-8.200 1.300z" fill="#00f000"/><path d="M5.500 11.500l2.800 0 .5 2h-3z" fill="#00f000"/><rect x="3" y="12.800" width="6" height="2.300" fill="#00f000"/><path d="M8.200 3.200l4.500 4.300M9.800 2l4 3.800M11.400 1.200l2.800 2.700" stroke="#00f000" stroke-width="1.150" stroke-dasharray="1.500 .7"/></svg><div style="left:21px;top:385px;width:10px;height:1px;background-image:linear-gradient(90deg,#808080 1px,transparent 1px);background-size:2px 1px"></div><svg style="left:31px;top:376px" width="14" height="17" viewBox="0 0 14 17"><path d="M1.500 15V2q0-.5.5-.5h7l3 3V15z" fill="#fff"/><path d="M1.500 15.300V2q0-.500.500-.500h7" fill="none" stroke="#a2a2a2" stroke-width="1"/><path d="M9 1.500l3 3V15.500" fill="none" stroke="#168a8a" stroke-width="1.100"/><path d="M1.300 15.600H12.500" stroke="#0f8080" stroke-width="1.500"/><path d="M8 14.500h3.300v-3" fill="none" stroke="#c8c8c8" stroke-width="1"/></svg><div class="row-sel" style="top:375px"></div><div class="rt" style="left:51.500px;top:379px;color:#fff;letter-spacing:.3px">042311</div><div class="rt" style="left:159px;top:379px">2</div><svg style="left:195px;top:374px" width="16" height="16" viewBox="0 0 16 16"><rect width="16" height="16" fill="#000"/><path d="M8 1.800a3.900 3.900 0 0 1 3.900 3.900c0 1.800-1.700 3-2.700 4.200v2.600h-2.400v-2.600c-1-1.200-2.700-2.400-2.700-4.200a3.900 3.900 0 0 1 3.900-3.900z" fill="#00f000"/><circle cx="8" cy="5.600" r="1.500" fill="#000"/><path d="M5 11c-2.300.5-2.200 3.300 3 3.300s5.300-2.800 3-3.300" fill="none" stroke="#00f000" stroke-width="1.300"/></svg><svg style="left:231px;top:374px" width="16" height="16" viewBox="0 0 16 16"><rect width="16" height="16" fill="#000"/><path d="M3.800 2.300L12.400 10.300q-4 2.800-8.200 1.300z" fill="#00f000"/><path d="M5.500 11.500l2.800 0 .5 2h-3z" fill="#00f000"/><rect x="3" y="12.800" width="6" height="2.300" fill="#00f000"/><path d="M8.200 3.200l4.500 4.300M9.800 2l4 3.800M11.400 1.200l2.800 2.700" stroke="#00f000" stroke-width="1.150" stroke-dasharray="1.500 .7"/></svg><div style="left:21px;top:405px;width:10px;height:1px;background-image:linear-gradient(90deg,#808080 1px,transparent 1px);background-size:2px 1px"></div><svg style="left:31px;top:396px" width="14" height="17" viewBox="0 0 14 17"><path d="M1.500 15V2q0-.5.5-.5h7l3 3V15z" fill="#fff"/><path d="M1.500 15.300V2q0-.500.500-.500h7" fill="none" stroke="#a2a2a2" stroke-width="1"/><path d="M9 1.500l3 3V15.500" fill="none" stroke="#168a8a" stroke-width="1.100"/><path d="M1.300 15.600H12.500" stroke="#0f8080" stroke-width="1.500"/><path d="M8 14.500h3.300v-3" fill="none" stroke="#c8c8c8" stroke-width="1"/></svg><div class="row-sel" style="top:395px"></div><div class="rt" style="left:51.500px;top:399px;color:#fff;letter-spacing:.3px">042312</div><div class="rt" style="left:159px;top:399px">2</div><svg style="left:195px;top:394px" width="16" height="16" viewBox="0 0 16 16"><rect width="16" height="16" fill="#000"/><path d="M8 1.800a3.900 3.900 0 0 1 3.900 3.900c0 1.800-1.700 3-2.700 4.200v2.600h-2.400v-2.600c-1-1.200-2.700-2.400-2.700-4.200a3.900 3.900 0 0 1 3.900-3.900z" fill="#00f000"/><circle cx="8" cy="5.600" r="1.500" fill="#000"/><path d="M5 11c-2.300.5-2.200 3.300 3 3.300s5.300-2.800 3-3.300" fill="none" stroke="#00f000" stroke-width="1.300"/></svg><svg style="left:231px;top:394px" width="16" height="16" viewBox="0 0 16 16"><rect width="16" height="16" fill="#000"/><path d="M3.800 2.300L12.400 10.300q-4 2.800-8.200 1.300z" fill="#00f000"/><path d="M5.500 11.500l2.800 0 .5 2h-3z" fill="#00f000"/><rect x="3" y="12.800" width="6" height="2.300" fill="#00f000"/><path d="M8.200 3.200l4.500 4.300M9.800 2l4 3.800M11.400 1.200l2.800 2.700" stroke="#00f000" stroke-width="1.150" stroke-dasharray="1.500 .7"/></svg><div style="left:21px;top:425px;width:10px;height:1px;background-image:linear-gradient(90deg,#808080 1px,transparent 1px);background-size:2px 1px"></div><svg style="left:31px;top:416px" width="14" height="17" viewBox="0 0 14 17"><path d="M1.500 15V2q0-.5.5-.5h7l3 3V15z" fill="#fff"/><path d="M1.500 15.300V2q0-.500.500-.500h7" fill="none" stroke="#a2a2a2" stroke-width="1"/><path d="M9 1.500l3 3V15.500" fill="none" stroke="#168a8a" stroke-width="1.100"/><path d="M1.300 15.600H12.500" stroke="#0f8080" stroke-width="1.500"/><path d="M8 14.500h3.300v-3" fill="none" stroke="#c8c8c8" stroke-width="1"/></svg><div class="row-sel" style="top:415px"></div><div class="rt" style="left:51.500px;top:419px;color:#fff;letter-spacing:.3px">042313</div><div class="rt" style="left:159px;top:419px">2</div><svg style="left:195px;top:414px" width="16" height="16" viewBox="0 0 16 16"><rect width="16" height="16" fill="#000"/><path d="M8 1.800a3.900 3.900 0 0 1 3.900 3.900c0 1.800-1.700 3-2.700 4.200v2.600h-2.400v-2.600c-1-1.200-2.700-2.400-2.700-4.200a3.900 3.900 0 0 1 3.900-3.900z" fill="#00f000"/><circle cx="8" cy="5.600" r="1.500" fill="#000"/><path d="M5 11c-2.300.5-2.200 3.300 3 3.300s5.300-2.800 3-3.300" fill="none" stroke="#00f000" stroke-width="1.300"/></svg><svg style="left:231px;top:414px" width="16" height="16" viewBox="0 0 16 16"><rect width="16" height="16" fill="#000"/><path d="M3.800 2.300L12.400 10.300q-4 2.800-8.200 1.300z" fill="#00f000"/><path d="M5.500 11.500l2.800 0 .5 2h-3z" fill="#00f000"/><rect x="3" y="12.800" width="6" height="2.300" fill="#00f000"/><path d="M8.200 3.200l4.500 4.300M9.800 2l4 3.800M11.400 1.200l2.800 2.700" stroke="#00f000" stroke-width="1.150" stroke-dasharray="1.500 .7"/></svg><div style="left:21px;top:445px;width:10px;height:1px;background-image:linear-gradient(90deg,#808080 1px,transparent 1px);background-size:2px 1px"></div><svg style="left:31px;top:436px" width="14" height="17" viewBox="0 0 14 17"><path d="M1.500 15V2q0-.5.5-.5h7l3 3V15z" fill="#fff"/><path d="M1.500 15.300V2q0-.500.500-.500h7" fill="none" stroke="#a2a2a2" stroke-width="1"/><path d="M9 1.500l3 3V15.500" fill="none" stroke="#168a8a" stroke-width="1.100"/><path d="M1.300 15.600H12.500" stroke="#0f8080" stroke-width="1.500"/><path d="M8 14.500h3.300v-3" fill="none" stroke="#c8c8c8" stroke-width="1"/></svg><div class="row-sel" style="top:435px"></div><div class="rt" style="left:51.500px;top:439px;color:#fff;letter-spacing:.3px">042314</div><div class="rt" style="left:159px;top:439px">2</div><svg style="left:195px;top:434px" width="16" height="16" viewBox="0 0 16 16"><rect width="16" height="16" fill="#000"/><path d="M8 1.800a3.900 3.900 0 0 1 3.900 3.900c0 1.800-1.700 3-2.700 4.200v2.600h-2.400v-2.600c-1-1.200-2.700-2.400-2.700-4.200a3.900 3.900 0 0 1 3.900-3.900z" fill="#00f000"/><circle cx="8" cy="5.600" r="1.500" fill="#000"/><path d="M5 11c-2.300.5-2.200 3.300 3 3.300s5.300-2.800 3-3.300" fill="none" stroke="#00f000" stroke-width="1.300"/></svg><svg style="left:231px;top:434px" width="16" height="16" viewBox="0 0 16 16"><rect width="16" height="16" fill="#000"/><path d="M3.800 2.300L12.400 10.300q-4 2.800-8.200 1.300z" fill="#00f000"/><path d="M5.500 11.500l2.800 0 .5 2h-3z" fill="#00f000"/><rect x="3" y="12.800" width="6" height="2.300" fill="#00f000"/><path d="M8.200 3.200l4.500 4.300M9.800 2l4 3.800M11.400 1.200l2.800 2.700" stroke="#00f000" stroke-width="1.150" stroke-dasharray="1.500 .7"/></svg><div style="left:21px;top:465px;width:10px;height:1px;background-image:linear-gradient(90deg,#808080 1px,transparent 1px);background-size:2px 1px"></div><svg style="left:31px;top:456px" width="14" height="17" viewBox="0 0 14 17"><path d="M1.500 15V2q0-.5.5-.5h7l3 3V15z" fill="#fff"/><path d="M1.500 15.300V2q0-.500.500-.500h7" fill="none" stroke="#a2a2a2" stroke-width="1"/><path d="M9 1.500l3 3V15.500" fill="none" stroke="#168a8a" stroke-width="1.100"/><path d="M1.300 15.600H12.500" stroke="#0f8080" stroke-width="1.500"/><path d="M8 14.500h3.300v-3" fill="none" stroke="#c8c8c8" stroke-width="1"/></svg><div class="row-sel" style="top:455px"></div><div class="rt" style="left:51.500px;top:459px;color:#fff;letter-spacing:.3px">042315</div><div class="rt" style="left:159px;top:459px">2</div><svg style="left:195px;top:454px" width="16" height="16" viewBox="0 0 16 16"><rect width="16" height="16" fill="#000"/><path d="M8 1.800a3.900 3.900 0 0 1 3.900 3.900c0 1.800-1.700 3-2.700 4.200v2.600h-2.400v-2.600c-1-1.200-2.700-2.400-2.700-4.200a3.900 3.900 0 0 1 3.900-3.900z" fill="#00f000"/><circle cx="8" cy="5.600" r="1.500" fill="#000"/><path d="M5 11c-2.300.5-2.200 3.300 3 3.300s5.300-2.800 3-3.300" fill="none" stroke="#00f000" stroke-width="1.300"/></svg><svg style="left:231px;top:454px" width="16" height="16" viewBox="0 0 16 16"><rect width="16" height="16" fill="#000"/><path d="M3.800 2.300L12.400 10.300q-4 2.800-8.200 1.300z" fill="#00f000"/><path d="M5.500 11.500l2.800 0 .5 2h-3z" fill="#00f000"/><rect x="3" y="12.800" width="6" height="2.300" fill="#00f000"/><path d="M8.200 3.200l4.500 4.300M9.800 2l4 3.800M11.400 1.200l2.800 2.700" stroke="#00f000" stroke-width="1.150" stroke-dasharray="1.500 .7"/></svg><div style="left:21px;top:485px;width:10px;height:1px;background-image:linear-gradient(90deg,#808080 1px,transparent 1px);background-size:2px 1px"></div><svg style="left:31px;top:476px" width="14" height="17" viewBox="0 0 14 17"><path d="M1.500 15V2q0-.5.5-.5h7l3 3V15z" fill="#fff"/><path d="M1.500 15.300V2q0-.500.500-.500h7" fill="none" stroke="#a2a2a2" stroke-width="1"/><path d="M9 1.500l3 3V15.500" fill="none" stroke="#168a8a" stroke-width="1.100"/><path d="M1.300 15.600H12.500" stroke="#0f8080" stroke-width="1.500"/><path d="M8 14.500h3.300v-3" fill="none" stroke="#c8c8c8" stroke-width="1"/></svg><div class="row-sel" style="top:475px"></div><div class="rt" style="left:51.500px;top:479px;color:#fff;letter-spacing:.3px">042316</div><div class="rt" style="left:159px;top:479px">2</div><svg style="left:195px;top:474px" width="16" height="16" viewBox="0 0 16 16"><rect width="16" height="16" fill="#000"/><path d="M8 1.800a3.900 3.900 0 0 1 3.900 3.900c0 1.800-1.700 3-2.700 4.200v2.600h-2.400v-2.600c-1-1.200-2.700-2.400-2.700-4.200a3.900 3.900 0 0 1 3.900-3.900z" fill="#00f000"/><circle cx="8" cy="5.600" r="1.500" fill="#000"/><path d="M5 11c-2.300.5-2.200 3.300 3 3.300s5.300-2.800 3-3.300" fill="none" stroke="#00f000" stroke-width="1.300"/></svg><svg style="left:231px;top:474px" width="16" height="16" viewBox="0 0 16 16"><rect width="16" height="16" fill="#000"/><path d="M3.800 2.300L12.400 10.300q-4 2.800-8.200 1.300z" fill="#00f000"/><path d="M5.500 11.500l2.800 0 .5 2h-3z" fill="#00f000"/><rect x="3" y="12.800" width="6" height="2.300" fill="#00f000"/><path d="M8.200 3.200l4.500 4.300M9.800 2l4 3.800M11.400 1.200l2.800 2.700" stroke="#00f000" stroke-width="1.150" stroke-dasharray="1.500 .7"/></svg><div style="left:21px;top:505px;width:10px;height:1px;background-image:linear-gradient(90deg,#808080 1px,transparent 1px);background-size:2px 1px"></div><svg style="left:31px;top:496px" width="14" height="17" viewBox="0 0 14 17"><path d="M1.500 15V2q0-.5.5-.5h7l3 3V15z" fill="#fff"/><path d="M1.500 15.300V2q0-.500.500-.500h7" fill="none" stroke="#a2a2a2" stroke-width="1"/><path d="M9 1.500l3 3V15.500" fill="none" stroke="#168a8a" stroke-width="1.100"/><path d="M1.300 15.600H12.500" stroke="#0f8080" stroke-width="1.500"/><path d="M8 14.500h3.300v-3" fill="none" stroke="#c8c8c8" stroke-width="1"/></svg><div class="row-sel" style="top:495px"></div><div class="rt" style="left:51.500px;top:499px;color:#fff;letter-spacing:.3px">042317</div><div class="rt" style="left:159px;top:499px">2</div><svg style="left:195px;top:494px" width="16" height="16" viewBox="0 0 16 16"><rect width="16" height="16" fill="#000"/><path d="M8 1.800a3.900 3.900 0 0 1 3.900 3.900c0 1.800-1.700 3-2.700 4.200v2.600h-2.400v-2.600c-1-1.200-2.700-2.400-2.700-4.200a3.900 3.900 0 0 1 3.900-3.900z" fill="#00f000"/><circle cx="8" cy="5.600" r="1.500" fill="#000"/><path d="M5 11c-2.300.5-2.200 3.300 3 3.300s5.300-2.800 3-3.300" fill="none" stroke="#00f000" stroke-width="1.300"/></svg><svg style="left:231px;top:494px" width="16" height="16" viewBox="0 0 16 16"><rect width="16" height="16" fill="#000"/><path d="M3.800 2.300L12.400 10.300q-4 2.800-8.200 1.300z" fill="#00f000"/><path d="M5.500 11.500l2.800 0 .5 2h-3z" fill="#00f000"/><rect x="3" y="12.800" width="6" height="2.300" fill="#00f000"/><path d="M8.200 3.200l4.500 4.300M9.800 2l4 3.800M11.400 1.200l2.800 2.700" stroke="#00f000" stroke-width="1.150" stroke-dasharray="1.500 .7"/></svg><div style="left:21px;top:525px;width:10px;height:1px;background-image:linear-gradient(90deg,#808080 1px,transparent 1px);background-size:2px 1px"></div><svg style="left:31px;top:516px" width="14" height="17" viewBox="0 0 14 17"><path d="M1.500 15V2q0-.5.5-.5h7l3 3V15z" fill="#fff"/><path d="M1.500 15.300V2q0-.500.500-.500h7" fill="none" stroke="#a2a2a2" stroke-width="1"/><path d="M9 1.500l3 3V15.500" fill="none" stroke="#168a8a" stroke-width="1.100"/><path d="M1.300 15.600H12.500" stroke="#0f8080" stroke-width="1.500"/><path d="M8 14.500h3.300v-3" fill="none" stroke="#c8c8c8" stroke-width="1"/></svg><div class="row-sel" style="top:515px"></div><div class="rt" style="left:51.500px;top:519px;color:#fff;letter-spacing:.3px">042318</div><div class="rt" style="left:159px;top:519px">2</div><svg style="left:195px;top:514px" width="16" height="16" viewBox="0 0 16 16"><rect width="16" height="16" fill="#000"/><path d="M8 1.800a3.900 3.900 0 0 1 3.900 3.900c0 1.800-1.700 3-2.700 4.200v2.600h-2.400v-2.600c-1-1.200-2.700-2.400-2.700-4.200a3.900 3.900 0 0 1 3.900-3.900z" fill="#00f000"/><circle cx="8" cy="5.600" r="1.500" fill="#000"/><path d="M5 11c-2.300.5-2.200 3.300 3 3.300s5.300-2.800 3-3.300" fill="none" stroke="#00f000" stroke-width="1.300"/></svg><svg style="left:231px;top:514px" width="16" height="16" viewBox="0 0 16 16"><rect width="16" height="16" fill="#000"/><path d="M3.800 2.300L12.400 10.300q-4 2.800-8.200 1.300z" fill="#00f000"/><path d="M5.500 11.500l2.800 0 .5 2h-3z" fill="#00f000"/><rect x="3" y="12.800" width="6" height="2.300" fill="#00f000"/><path d="M8.200 3.200l4.500 4.300M9.800 2l4 3.800M11.400 1.200l2.800 2.700" stroke="#00f000" stroke-width="1.150" stroke-dasharray="1.500 .7"/></svg><div style="left:21px;top:545px;width:10px;height:1px;background-image:linear-gradient(90deg,#808080 1px,transparent 1px);background-size:2px 1px"></div><svg style="left:31px;top:536px" width="14" height="17" viewBox="0 0 14 17"><path d="M1.500 15V2q0-.5.5-.5h7l3 3V15z" fill="#fff"/><path d="M1.500 15.300V2q0-.500.500-.500h7" fill="none" stroke="#a2a2a2" stroke-width="1"/><path d="M9 1.500l3 3V15.500" fill="none" stroke="#168a8a" stroke-width="1.100"/><path d="M1.300 15.600H12.500" stroke="#0f8080" stroke-width="1.500"/><path d="M8 14.500h3.300v-3" fill="none" stroke="#c8c8c8" stroke-width="1"/></svg><div class="row-sel" style="top:535px"></div><div class="rt" style="left:51.500px;top:539px;color:#fff;letter-spacing:.3px">042319</div><div class="rt" style="left:159px;top:539px">2</div><svg style="left:195px;top:534px" width="16" height="16" viewBox="0 0 16 16"><rect width="16" height="16" fill="#000"/><path d="M8 1.800a3.900 3.900 0 0 1 3.900 3.900c0 1.800-1.700 3-2.700 4.200v2.600h-2.400v-2.600c-1-1.200-2.700-2.400-2.700-4.200a3.900 3.900 0 0 1 3.900-3.900z" fill="#00f000"/><circle cx="8" cy="5.600" r="1.500" fill="#000"/><path d="M5 11c-2.300.5-2.200 3.300 3 3.300s5.300-2.800 3-3.300" fill="none" stroke="#00f000" stroke-width="1.300"/></svg><svg style="left:231px;top:534px" width="16" height="16" viewBox="0 0 16 16"><rect width="16" height="16" fill="#000"/><path d="M3.800 2.300L12.400 10.300q-4 2.800-8.200 1.300z" fill="#00f000"/><path d="M5.500 11.500l2.800 0 .5 2h-3z" fill="#00f000"/><rect x="3" y="12.800" width="6" height="2.300" fill="#00f000"/><path d="M8.200 3.200l4.500 4.300M9.800 2l4 3.800M11.400 1.200l2.800 2.700" stroke="#00f000" stroke-width="1.150" stroke-dasharray="1.500 .7"/></svg><div style="left:21px;top:565px;width:10px;height:1px;background-image:linear-gradient(90deg,#808080 1px,transparent 1px);background-size:2px 1px"></div><svg style="left:31px;top:556px" width="14" height="17" viewBox="0 0 14 17"><path d="M1.500 15V2q0-.5.5-.5h7l3 3V15z" fill="#fff"/><path d="M1.500 15.300V2q0-.500.500-.500h7" fill="none" stroke="#a2a2a2" stroke-width="1"/><path d="M9 1.500l3 3V15.500" fill="none" stroke="#168a8a" stroke-width="1.100"/><path d="M1.300 15.600H12.500" stroke="#0f8080" stroke-width="1.500"/><path d="M8 14.500h3.300v-3" fill="none" stroke="#c8c8c8" stroke-width="1"/></svg><div class="row-sel" style="top:555px"></div><div class="rt" style="left:51.500px;top:559px;color:#fff;letter-spacing:.3px">042320</div><div class="rt" style="left:159px;top:559px">2</div><svg style="left:195px;top:554px" width="16" height="16" viewBox="0 0 16 16"><rect width="16" height="16" fill="#000"/><path d="M8 1.800a3.900 3.900 0 0 1 3.900 3.900c0 1.800-1.700 3-2.700 4.200v2.600h-2.400v-2.600c-1-1.200-2.700-2.400-2.700-4.200a3.900 3.900 0 0 1 3.900-3.900z" fill="#00f000"/><circle cx="8" cy="5.600" r="1.500" fill="#000"/><path d="M5 11c-2.300.5-2.200 3.300 3 3.300s5.300-2.800 3-3.300" fill="none" stroke="#00f000" stroke-width="1.300"/></svg><svg style="left:231px;top:554px" width="16" height="16" viewBox="0 0 16 16"><rect width="16" height="16" fill="#000"/><path d="M3.800 2.300L12.400 10.300q-4 2.800-8.200 1.300z" fill="#00f000"/><path d="M5.500 11.500l2.800 0 .5 2h-3z" fill="#00f000"/><rect x="3" y="12.800" width="6" height="2.300" fill="#00f000"/><path d="M8.200 3.200l4.500 4.300M9.800 2l4 3.800M11.400 1.200l2.800 2.700" stroke="#00f000" stroke-width="1.150" stroke-dasharray="1.500 .7"/></svg><div style="left:0;top:560px;width:522px;height:5px;background:#eef0fa"></div><div style="left:0;top:560px;width:514px;height:1px;background:#9a9a9a"></div><div class="sbtrack" style="left:498px;top:154px;width:16px;height:406px"></div><div style="left:502px;top:162px;border-left:4px solid transparent;border-right:4px solid transparent;border-bottom:4px solid #404040"></div><div style="left:502px;top:550px;border-left:4px solid transparent;border-right:4px solid transparent;border-top:4px solid #404040"></div><div class="thumb" style="left:498px;top:173px;width:15px;height:143px"></div><div class="gripm" style="left:502px;top:241px"></div><div class="gripm" style="left:502px;top:244px"></div><div class="gripm" style="left:502px;top:247px"></div><div style="left:515px;top:110px;width:4px;height:891px;background:#e9ecf9"></div><div class="dockhdr" style="top:565px;height:24px;background:linear-gradient(180deg,#b7c7d9 0%,#bccbdc 30%,#c9d7e6 70%,#d6e2ef 100%)"></div><div style="left:0;top:589px;width:514px;height:1px;background:#8a8a8a"></div><div class="t" style="left:-5px;top:568px;font-size:16px;line-height:16px;color:#3a3a3a">视图属性</div><svg class="hx" style="left:501px;top:573px" width="9" height="8" viewBox="0 0 9 8"><path d="M1 0.5L8 7.5M8 0.5L1 7.5" stroke="#000" stroke-width="1.6" fill="none"/></svg><div style="left:0;top:590px;width:515px;height:420px;background:#fff;border-right:1px solid #a6a6a6"></div><div class="lvh" style="left:0;top:590px;width:513px;height:21px"></div><div style="left:0;top:611px;width:513px;height:1px;background:#d5d5d5"></div><div style="left:305px;top:590px;width:1px;height:411px;background:#e6e6e6"></div><div class="rt" style="left:-3px;top:596px">属性</div><div class="rt" style="left:312px;top:596px">值</div><div style="left:306px;top:612px;width:207px;height:19px;background:#f0f0f0"></div><div style="left:0;top:631px;width:513px;height:1px;background:#e8e8e8"></div><div class="rt" style="left:-3px;top:616px">当前坐标系</div><div class="rt" style="left:309px;top:616px">工程坐标系</div><div style="left:306px;top:631px;width:207px;height:19px;background:#f0f0f0"></div><div style="left:0;top:650px;width:513px;height:1px;background:#e8e8e8"></div><div class="rt" style="left:-3px;top:635px">加载总点数</div><div class="rt" style="left:309px;top:635px;letter-spacing:-.6px">87935963</div><div style="left:0;top:669px;width:513px;height:1px;background:#e8e8e8"></div><div class="rt" style="left:-3px;top:654px">投影模式</div><div class="rt" style="left:309px;top:654px">透视投影</div><div style="left:0;top:688px;width:513px;height:1px;background:#e8e8e8"></div><div class="rt" style="left:-3px;top:673px">剪切近面</div><div class="rt" style="left:309px;top:673px;letter-spacing:-.6px">2143.4</div><div style="left:0;top:707px;width:513px;height:1px;background:#e8e8e8"></div><div class="rt" style="left:-3px;top:692px">剪切远面</div><div class="rt" style="left:309px;top:692px;letter-spacing:-.6px">2809.83</div><div style="left:0;top:726px;width:513px;height:1px;background:#e8e8e8"></div><div class="rt" style="left:-3px;top:711px">透视角度</div><div class="rt" style="left:309px;top:711px;letter-spacing:-.6px">45</div><div style="left:0;top:745px;width:513px;height:1px;background:#e8e8e8"></div><div class="rt" style="left:-3px;top:730px">点云渲染点的大小</div><div class="rt" style="left:309px;top:730px;letter-spacing:-.6px">1</div><div style="left:0;top:764px;width:513px;height:1px;background:#e8e8e8"></div><div class="rt" style="left:-3px;top:749px">视口背景颜色</div><div style="left:308px;top:747px;width:16px;height:16px;background:#87cefa;border:1px solid #7a7a7a"></div><div class="rt" style="left:328px;top:749px;letter-spacing:-.4px">87CEFA</div><div style="left:0;top:783px;width:513px;height:1px;background:#e8e8e8"></div><div class="rt" style="left:-3px;top:768px">量测点大小</div><div class="rt" style="left:309px;top:768px;letter-spacing:-.6px">10</div><div style="left:0;top:802px;width:513px;height:1px;background:#e8e8e8"></div><div class="rt" style="left:-3px;top:787px">量测线宽</div><div class="rt" style="left:309px;top:787px;letter-spacing:-.6px">2</div><div style="left:0;top:821px;width:513px;height:1px;background:#e8e8e8"></div><div class="rt" style="left:-3px;top:806px">量测点的颜色</div><div style="left:308px;top:804px;width:16px;height:16px;background:#0000ff;border:1px solid #7a7a7a"></div><div class="rt" style="left:328px;top:806px;letter-spacing:-.4px">0000FF</div><div style="left:0;top:840px;width:513px;height:1px;background:#e8e8e8"></div><div class="rt" style="left:-3px;top:825px">量测线的颜色</div><div style="left:308px;top:823px;width:16px;height:16px;background:#ff0000;border:1px solid #7a7a7a"></div><div class="rt" style="left:328px;top:825px;letter-spacing:-.4px">FF0000</div><div style="left:0;top:859px;width:513px;height:1px;background:#e8e8e8"></div><div class="rt" style="left:-3px;top:844px">显示测站名称</div><div class="rt" style="left:309px;top:844px">是</div><div style="left:519px;top:110px;width:988px;height:24px;background:#f0f0f0"></div><div style="left:521px;top:113px;width:129px;height:21px;background:linear-gradient(180deg,#f1f1f1 0%,#e5e5e5 46%,#d7d7d7 54%,#d1d1d1 100%);border:1px solid #a8a8a8;border-bottom:none"></div><svg style="left:525px;top:114px" width="17" height="17" viewBox="0 0 17 17"><circle cx="8.500" cy="8.500" r="8" fill="#1565b8" stroke="#10283c" stroke-width=".6"/><path d="M14 4.800c-2.500-3-8.500-2.200-8.300 1s6.500 2.300 6.300 5.300-5.500 3.600-9 1" fill="none" stroke="#fff" stroke-width="1.800"/><path d="M2.300 9.500c-.5-3 1.500-5.500 4-6.300" fill="none" stroke="#fff" stroke-width="1.100"/><path d="M14.700 7.500c.5 3-1.500 5.500-4 6.300" fill="none" stroke="#fff" stroke-width="1.100"/></svg><div class="t" style="left:543px;top:115px;font-size:16px;line-height:16px;color:#808080">0423dm.cloud</div><div style="left:650px;top:112px;width:143px;height:23px;background:#fff;border:1px solid #a8a8a8;border-bottom:none"></div><svg style="left:653px;top:114px" width="17" height="17" viewBox="0 0 17 17"><circle cx="8.500" cy="8.500" r="8" fill="#1565b8" stroke="#10283c" stroke-width=".6"/><path d="M14 4.800c-2.500-3-8.500-2.200-8.300 1s6.500 2.300 6.300 5.300-5.500 3.600-9 1" fill="none" stroke="#fff" stroke-width="1.800"/><path d="M2.300 9.500c-.5-3 1.500-5.500 4-6.300" fill="none" stroke="#fff" stroke-width="1.100"/><path d="M14.700 7.500c.5 3-1.500 5.500-4 6.300" fill="none" stroke="#fff" stroke-width="1.100"/></svg><div class="t" style="left:671px;top:115px;font-size:15px;line-height:16px;font-weight:bold;letter-spacing:-.2px">0423all.cloud</div><svg style="left:775px;top:120px" width="9" height="8" viewBox="0 0 9 8"><path d="M1 .5L8 7.500M8 .5L1 7.500" stroke="#000" stroke-width="1.400"/></svg><div style="left:1498px;top:121px;border-left:4px solid transparent;border-right:4px solid transparent;border-top:4px solid #303030"></div><div style="left:519px;top:134px;width:988px;height:2px;background:#fff"></div><div style="left:519px;top:136px;width:1px;height:865px;background:#a2a2a2"></div><div style="left:520px;top:136px;width:987px;height:865px;background:#e9ecf9"></div><div style="left:524px;top:139px;width:983px;height:862px;background:#8e8e8e"></div><div style="left:525px;top:140px;width:982px;height:861px;background:#585858"></div><div id="vp" style="left:526px;top:141px;width:981px;height:860px;background:linear-gradient(180deg,#333333 0px,#87cefa 860px)"></div><svg style="left:650px;top:790px" width="120" height="110" viewBox="650 790 120 110">
<path d="M673.500 870V817" stroke="#00e000" stroke-width="1.300"/>
<path d="M673.400 803l5.600 14.500q-5.600 3-11.200 0z" fill="#00d800"/><path d="M668 817.500q5.500 3 11 0" stroke="#003000" stroke-width="1" fill="none"/>
<path d="M680 875.500h52" stroke="#f00000" stroke-width="1.300"/>
<path d="M745 876l-14-5.500v11.500z" fill="#e80000"/><path d="M731 870.500v11.500" stroke="#300000" stroke-width="1"/>
<circle cx="673.400" cy="876.300" r="6.500" fill="#000060"/>
<g font-family="Liberation Sans, sans-serif" font-weight="bold" font-style="italic" font-size="19" fill="#fff">
<text transform="translate(678.300 814.700) scale(.8 1.130)">Y</text><text transform="translate(676.200 872.400) scale(.94 1.130)">Z</text><text transform="translate(735 872.400) scale(.98 1.130)">X</text></g>
</svg><div id="dlg" style="left:517px;top:238px;width:868px;height:553px;border-radius:7px 7px 6px 6px;box-shadow:0 0 0 1px rgba(16,24,40,.85),2px 3px 9px 4px rgba(0,0,0,.72);background:#2a62b4;overflow:hidden"><div style="left:0;top:0;width:868px;height:30px;background:#17407f"></div><div style="left:0;top:0;width:220px;height:30px;background:linear-gradient(144deg,#c9d6ea 0%,#c4d2e8 8%,#b5c7e2 22%,#9bb3d6 34%,#6c8fc0 45%,#3b62a1 54%,#17407f 62%)"></div><div style="left:620px;top:0;width:248px;height:30px;background:linear-gradient(29deg,#17407f 33%,#355a98 45%,#5f80b0 60%,#6a88b6 80%,#7090bc 100%)"></div><div style="left:0;top:0;width:868px;height:30px;background:linear-gradient(180deg,rgba(255,255,255,.22) 0,rgba(255,255,255,.05) 30%,rgba(0,0,0,0) 100%)"></div><div style="left:0;top:28px;width:7px;height:130px;background:linear-gradient(180deg,#9fb6db 0%,#b9cbe6 50%,#d3def0 100%)"></div><div style="left:0;top:158px;width:7px;height:395px;background:#4876c0"></div><div style="left:861px;top:28px;width:7px;height:130px;background:linear-gradient(180deg,#6d8ab9 0%,#8fa9d2 60%,#b9cae6 100%)"></div><div style="left:861px;top:158px;width:7px;height:395px;background:#1f4f9b"></div><div style="left:0;top:546px;width:868px;height:7px;background:linear-gradient(90deg,#4876c0 0,#2763b9 80px,#2360b6 868px)"></div><div style="left:0;top:0;width:868px;height:553px;border-radius:7px 7px 6px 6px;box-shadow:inset 0 0 0 1px rgba(255,255,255,.55)"></div><div style="left:6px;top:28px;width:856px;height:519px;background:#f0f0f0;border:1px solid #2c3f5e;box-shadow:0 0 0 1px rgba(255,255,255,.35)"></div></div><div class="t" style="left:524px;top:247px;font-size:12px;line-height:12px;text-shadow:0 0 5px #fff,0 0 8px #fff,0 0 10px #fff">GPS定向</div><div style="left:1332px;top:238px;width:47px;height:19px;border-radius:0 0 5px 5px;border:1px solid #4a1c1c;border-top:none;background:linear-gradient(180deg,#e9bcb5 0%,#dc9d94 25%,#d28379 48%,#c03a27 52%,#c1412b 75%,#d4694c 100%);box-shadow:inset 0 0 0 1px rgba(255,255,255,.4)"></div><svg style="left:1350px;top:241px" width="13" height="11" viewBox="0 0 13 11"><path d="M2.500 2L10.500 9.500M10.500 2L2.500 9.500" stroke="#48383a" stroke-width="4"/><path d="M2.500 2L10.500 9.500M10.500 2L2.500 9.500" stroke="#fff" stroke-width="2.500"/></svg><div class="t" style="left:538px;top:286px;font-size:12px;line-height:12px">点云参考点:</div><div style="left:611px;top:278px;width:75px;height:26px;border:1px solid #707070;background:linear-gradient(180deg,#f4f4f4,#ececec)"></div><div class="t" style="left:618px;top:285px;font-size:12px;line-height:12px">显示选择点</div><div style="left:536px;top:307px;width:831px;height:432px;background:#fff;border-top:1px solid #828282;border-left:1px solid #828282"></div><div style="left:536px;top:738px;width:831px;height:1px;background:#e3e3e3"></div><div class="lvh" style="left:537px;top:308px;width:813px;height:16px"></div><div style="left:537px;top:324px;width:813px;height:1px;background:#d6d6d6"></div><div style="left:555px;top:308px;width:1px;height:16px;background:#e3e4ea"></div><div style="left:652px;top:308px;width:1px;height:16px;background:#e3e4ea"></div><div style="left:700px;top:308px;width:1px;height:16px;background:#e3e4ea"></div><div style="left:748px;top:308px;width:1px;height:16px;background:#e3e4ea"></div><div style="left:816px;top:308px;width:1px;height:16px;background:#e3e4ea"></div><div style="left:884px;top:308px;width:1px;height:16px;background:#e3e4ea"></div><div style="left:952px;top:308px;width:1px;height:16px;background:#e3e4ea"></div><div style="left:1039px;top:308px;width:1px;height:16px;background:#e3e4ea"></div><div style="left:1126px;top:308px;width:1px;height:16px;background:#e3e4ea"></div><div style="left:1194px;top:308px;width:1px;height:16px;background:#e3e4ea"></div><div style="left:1252px;top:308px;width:1px;height:16px;background:#e3e4ea"></div><div style="left:1320px;top:308px;width:1px;height:16px;background:#e3e4ea"></div><div class="t hd" style="left:560px;top:310px;font-size:12px;line-height:12px">点云</div><div class="t hd" style="left:652px;width:49px;text-align:center;top:310px;font-size:12px;line-height:12px">类型</div><div class="t hd" style="left:700px;width:49px;text-align:center;top:310px;font-size:12px;line-height:12px">标签</div><div class="t hd" style="left:748px;width:69px;text-align:center;top:310px;font-size:12px;line-height:12px"><span class=ls style=position:static>X</span></div><div class="t hd" style="left:816px;width:69px;text-align:center;top:310px;font-size:12px;line-height:12px"><span class=ls style=position:static>Y</span></div><div class="t hd" style="left:884px;width:69px;text-align:center;top:310px;font-size:12px;line-height:12px"><span class=ls style=position:static>Z</span></div><div class="t hd" style="left:952px;width:88px;text-align:center;top:310px;font-size:12px;line-height:12px">东</div><div class="t hd" style="left:1039px;width:88px;text-align:center;top:310px;font-size:12px;line-height:12px">北</div><div class="t hd" style="left:1126px;width:69px;text-align:center;top:310px;font-size:12px;line-height:12px">高程</div><div class="t hd" style="left:1194px;width:59px;text-align:center;top:310px;font-size:12px;line-height:12px">固定<span class=ls style=position:static;font-size:10px>GPS</span></div><div class="t hd" style="left:1252px;width:69px;text-align:center;top:310px;font-size:12px;line-height:12px">误差<span class=ls style=position:static>(</span>米<span class=ls style=position:static>)</span></div><div style="left:537px;top:326px;width:813px;height:412px;overflow:hidden"><div style="left:0;top:1px;width:18px;height:420px;background:#e2e2e2"></div><div style="left:0;top:1px;width:784px;height:1px;background:#000"></div><div style="left:0;top:21px;width:784px;height:1px;background:#000"></div><div style="left:0;top:41px;width:784px;height:1px;background:#000"></div><div style="left:0;top:61px;width:784px;height:1px;background:#000"></div><div style="left:0;top:81px;width:784px;height:1px;background:#000"></div><div style="left:0;top:101px;width:784px;height:1px;background:#000"></div><div style="left:0;top:121px;width:784px;height:1px;background:#000"></div><div style="left:0;top:141px;width:784px;height:1px;background:#000"></div><div style="left:0;top:161px;width:784px;height:1px;background:#000"></div><div style="left:0;top:181px;width:784px;height:1px;background:#000"></div><div style="left:0;top:201px;width:784px;height:1px;background:#000"></div><div style="left:0;top:221px;width:784px;height:1px;background:#000"></div><div style="left:0;top:241px;width:784px;height:1px;background:#000"></div><div style="left:0;top:261px;width:784px;height:1px;background:#000"></div><div style="left:0;top:281px;width:784px;height:1px;background:#000"></div><div style="left:0;top:301px;width:784px;height:1px;background:#000"></div><div style="left:0;top:321px;width:784px;height:1px;background:#000"></div><div style="left:0;top:341px;width:784px;height:1px;background:#000"></div><div style="left:0;top:361px;width:784px;height:1px;background:#000"></div><div style="left:0;top:381px;width:784px;height:1px;background:#000"></div><div style="left:0;top:401px;width:784px;height:1px;background:#000"></div><div style="left:0;top:421px;width:784px;height:1px;background:#000"></div><div style="left:18px;top:1px;width:1px;height:420px;background:#000"></div><div style="left:115px;top:1px;width:1px;height:420px;background:#000"></div><div style="left:163px;top:1px;width:1px;height:420px;background:#000"></div><div style="left:211px;top:1px;width:1px;height:420px;background:#000"></div><div style="left:279px;top:1px;width:1px;height:420px;background:#000"></div><div style="left:347px;top:1px;width:1px;height:420px;background:#000"></div><div style="left:415px;top:1px;width:1px;height:420px;background:#000"></div><div style="left:502px;top:1px;width:1px;height:420px;background:#000"></div><div style="left:589px;top:1px;width:1px;height:420px;background:#000"></div><div style="left:657px;top:1px;width:1px;height:420px;background:#000"></div><div style="left:715px;top:1px;width:1px;height:420px;background:#000"></div><div style="left:783px;top:1px;width:1px;height:420px;background:#000"></div><div style="left:0;top:1px;width:1px;height:420px;background:#8a8a8a"></div><div class="c" style="left:-1px;width:18px;top:6px;letter-spacing:-.5px">1</div><div class="c" style="left:22px;top:6px;text-align:left">042301</div><div class="t" style="left:115px;width:49px;text-align:center;top:5px;font-size:12px;line-height:12px">中心</div><div class="t" style="left:163px;width:49px;text-align:center;top:5px;font-size:12px;line-height:12px">中心</div><div class="c" style="left:210px;width:69px;top:6px">389<i>.</i>8379</div><div class="c" style="left:278px;width:69px;top:6px">618<i>.</i>4457</div><div class="c" style="left:346px;width:69px;top:6px"><i>-</i>146<i>.</i>2154</div><div class="c" style="left:414px;width:88px;top:6px">596494<i>.</i>1730</div><div class="c" style="left:501px;width:88px;top:6px">3953252<i>.</i>5300</div><div class="c" style="left:588px;width:69px;top:6px">1798<i>.</i>2880</div><div class="t" style="left:657px;width:59px;text-align:center;top:5px;font-size:12px;line-height:12px">是</div><div class="c" style="left:-1px;width:18px;top:26px;letter-spacing:-.5px">2</div><div class="c" style="left:22px;top:26px;text-align:left">042302</div><div class="t" style="left:115px;width:49px;text-align:center;top:25px;font-size:12px;line-height:12px">中心</div><div class="t" style="left:163px;width:49px;text-align:center;top:25px;font-size:12px;line-height:12px">中心</div><div class="c" style="left:210px;width:69px;top:26px">370<i>.</i>0318</div><div class="c" style="left:278px;width:69px;top:26px">590<i>.</i>9525</div><div class="c" style="left:346px;width:69px;top:26px"><i>-</i>132<i>.</i>3684</div><div class="c" style="left:414px;width:88px;top:26px">596458<i>.</i>6080</div><div class="c" style="left:501px;width:88px;top:26px">3953261<i>.</i>1990</div><div class="c" style="left:588px;width:69px;top:26px">1797<i>.</i>7157</div><div class="t" style="left:657px;width:59px;text-align:center;top:25px;font-size:12px;line-height:12px">是</div><div class="c" style="left:-1px;width:18px;top:46px;letter-spacing:-.5px">3</div><div class="c" style="left:22px;top:46px;text-align:left">042303</div><div class="t" style="left:115px;width:49px;text-align:center;top:45px;font-size:12px;line-height:12px">中心</div><div class="t" style="left:163px;width:49px;text-align:center;top:45px;font-size:12px;line-height:12px">中心</div><div class="c" style="left:210px;width:69px;top:46px">350<i>.</i>1231</div><div class="c" style="left:278px;width:69px;top:46px">564<i>.</i>5690</div><div class="c" style="left:346px;width:69px;top:46px"><i>-</i>119<i>.</i>5099</div><div class="c" style="left:414px;width:88px;top:46px">596423<i>.</i>9270</div><div class="c" style="left:501px;width:88px;top:46px">3953268<i>.</i>6370</div><div class="c" style="left:588px;width:69px;top:46px">1800<i>.</i>2350</div><div class="t" style="left:657px;width:59px;text-align:center;top:45px;font-size:12px;line-height:12px">是</div><div class="c" style="left:-1px;width:18px;top:66px;letter-spacing:-.5px">4</div><div class="c" style="left:22px;top:66px;text-align:left">042304</div><div class="t" style="left:115px;width:49px;text-align:center;top:65px;font-size:12px;line-height:12px">中心</div><div class="t" style="left:163px;width:49px;text-align:center;top:65px;font-size:12px;line-height:12px">中心</div><div class="c" style="left:210px;width:69px;top:66px">333<i>.</i>0704</div><div class="c" style="left:278px;width:69px;top:66px">535<i>.</i>3828</div><div class="c" style="left:346px;width:69px;top:66px"><i>-</i>103<i>.</i>6711</div><div class="c" style="left:414px;width:88px;top:66px">596388<i>.</i>7244</div><div class="c" style="left:501px;width:88px;top:66px">3953280<i>.</i>9340</div><div class="c" style="left:588px;width:69px;top:66px">1801<i>.</i>3406</div><div class="t" style="left:657px;width:59px;text-align:center;top:65px;font-size:12px;line-height:12px">是</div><div class="c" style="left:-1px;width:18px;top:86px;letter-spacing:-.5px">5</div><div class="c" style="left:22px;top:86px;text-align:left">042305</div><div class="t" style="left:115px;width:49px;text-align:center;top:85px;font-size:12px;line-height:12px">中心</div><div class="t" style="left:163px;width:49px;text-align:center;top:85px;font-size:12px;line-height:12px">中心</div><div class="c" style="left:210px;width:69px;top:86px">297<i>.</i>3195</div><div class="c" style="left:278px;width:69px;top:86px">513<i>.</i>3143</div><div class="c" style="left:346px;width:69px;top:86px"><i>-</i>98<i>.</i>9252</div><div class="c" style="left:414px;width:88px;top:86px">596348<i>.</i>1050</div><div class="c" style="left:501px;width:88px;top:86px">3953281<i>.</i>2070</div><div class="c" style="left:588px;width:69px;top:86px">1802<i>.</i>3090</div><div class="t" style="left:657px;width:59px;text-align:center;top:85px;font-size:12px;line-height:12px">是</div><div class="c" style="left:-1px;width:18px;top:106px;letter-spacing:-.5px">6</div><div class="c" style="left:22px;top:106px;text-align:left">042306</div><div class="t" style="left:115px;width:49px;text-align:center;top:105px;font-size:12px;line-height:12px">中心</div><div class="t" style="left:163px;width:49px;text-align:center;top:105px;font-size:12px;line-height:12px">中心</div><div class="c" style="left:210px;width:69px;top:106px">272<i>.</i>7774</div><div class="c" style="left:278px;width:69px;top:106px">486<i>.</i>4844</div><div class="c" style="left:346px;width:69px;top:106px"><i>-</i>95<i>.</i>2882</div><div class="c" style="left:414px;width:88px;top:106px">596312<i>.</i>0356</div><div class="c" style="left:501px;width:88px;top:106px">3953286<i>.</i>6880</div><div class="c" style="left:588px;width:69px;top:106px">1803<i>.</i>3496</div><div class="t" style="left:657px;width:59px;text-align:center;top:105px;font-size:12px;line-height:12px">是</div><div class="c" style="left:-1px;width:18px;top:126px;letter-spacing:-.5px">7</div><div class="c" style="left:22px;top:126px;text-align:left">042307</div><div class="t" style="left:115px;width:49px;text-align:center;top:125px;font-size:12px;line-height:12px">中心</div><div class="t" style="left:163px;width:49px;text-align:center;top:125px;font-size:12px;line-height:12px">中心</div><div class="c" style="left:210px;width:69px;top:126px">250<i>.</i>2315</div><div class="c" style="left:278px;width:69px;top:126px">471<i>.</i>5137</div><div class="c" style="left:346px;width:69px;top:126px"><i>-</i>93<i>.</i>6846</div><div class="c" style="left:414px;width:88px;top:126px">596287<i>.</i>1180</div><div class="c" style="left:501px;width:88px;top:126px">3953297<i>.</i>2300</div><div class="c" style="left:588px;width:69px;top:126px">1804<i>.</i>1360</div><div class="t" style="left:657px;width:59px;text-align:center;top:125px;font-size:12px;line-height:12px">是</div><div class="c" style="left:-1px;width:18px;top:146px;letter-spacing:-.5px">8</div><div class="c" style="left:22px;top:146px;text-align:left">042308</div><div class="t" style="left:115px;width:49px;text-align:center;top:145px;font-size:12px;line-height:12px">中心</div><div class="t" style="left:163px;width:49px;text-align:center;top:145px;font-size:12px;line-height:12px">中心</div><div class="c" style="left:210px;width:69px;top:146px">216<i>.</i>5954</div><div class="c" style="left:278px;width:69px;top:146px">460<i>.</i>8511</div><div class="c" style="left:346px;width:69px;top:146px"><i>-</i>93<i>.</i>9985</div><div class="c" style="left:414px;width:88px;top:146px">596259<i>.</i>7958</div><div class="c" style="left:501px;width:88px;top:146px">3953319<i>.</i>5280</div><div class="c" style="left:588px;width:69px;top:146px">1805<i>.</i>0706</div><div class="t" style="left:657px;width:59px;text-align:center;top:145px;font-size:12px;line-height:12px">是</div><div class="c" style="left:-1px;width:18px;top:166px;letter-spacing:-.5px">9</div><div class="c" style="left:22px;top:166px;text-align:left">042309</div><div class="t" style="left:115px;width:49px;text-align:center;top:165px;font-size:12px;line-height:12px">中心</div><div class="t" style="left:163px;width:49px;text-align:center;top:165px;font-size:12px;line-height:12px">中心</div><div class="c" style="left:210px;width:69px;top:166px">194<i>.</i>9597</div><div class="c" style="left:278px;width:69px;top:166px">447<i>.</i>2881</div><div class="c" style="left:346px;width:69px;top:166px"><i>-</i>92<i>.</i>8529</div><div class="c" style="left:414px;width:88px;top:166px">596236<i>.</i>5450</div><div class="c" style="left:501px;width:88px;top:166px">3953330<i>.</i>0820</div><div class="c" style="left:588px;width:69px;top:166px">1805<i>.</i>6190</div><div class="t" style="left:657px;width:59px;text-align:center;top:165px;font-size:12px;line-height:12px">是</div><div class="c" style="left:-1px;width:18px;top:186px;letter-spacing:-.5px">10</div><div class="c" style="left:22px;top:186px;text-align:left">042310</div><div class="t" style="left:115px;width:49px;text-align:center;top:185px;font-size:12px;line-height:12px">中心</div><div class="t" style="left:163px;width:49px;text-align:center;top:185px;font-size:12px;line-height:12px">中心</div><div class="c" style="left:210px;width:69px;top:186px">187<i>.</i>9996</div><div class="c" style="left:278px;width:69px;top:186px">419<i>.</i>7031</div><div class="c" style="left:346px;width:69px;top:186px"><i>-</i>87<i>.</i>7291</div><div class="c" style="left:414px;width:88px;top:186px">596209<i>.</i>3419</div><div class="c" style="left:501px;width:88px;top:186px">3953320<i>.</i>2350</div><div class="c" style="left:588px;width:69px;top:186px">1806<i>.</i>5477</div><div class="t" style="left:657px;width:59px;text-align:center;top:185px;font-size:12px;line-height:12px">是</div><div class="c" style="left:-1px;width:18px;top:206px;letter-spacing:-.5px">11</div><div class="c" style="left:22px;top:206px;text-align:left">042311</div><div class="t" style="left:115px;width:49px;text-align:center;top:205px;font-size:12px;line-height:12px">中心</div><div class="t" style="left:163px;width:49px;text-align:center;top:205px;font-size:12px;line-height:12px">中心</div><div class="c" style="left:210px;width:69px;top:206px">187<i>.</i>4751</div><div class="c" style="left:278px;width:69px;top:206px">397<i>.</i>7934</div><div class="c" style="left:346px;width:69px;top:206px"><i>-</i>83<i>.</i>2303</div><div class="c" style="left:414px;width:88px;top:206px">596190<i>.</i>4820</div><div class="c" style="left:501px;width:88px;top:206px">3953308<i>.</i>1560</div><div class="c" style="left:588px;width:69px;top:206px">1807<i>.</i>0920</div><div class="t" style="left:657px;width:59px;text-align:center;top:205px;font-size:12px;line-height:12px">是</div><div class="c" style="left:-1px;width:18px;top:226px;letter-spacing:-.5px">12</div><div class="c" style="left:22px;top:226px;text-align:left">042312</div><div class="t" style="left:115px;width:49px;text-align:center;top:225px;font-size:12px;line-height:12px">中心</div><div class="t" style="left:163px;width:49px;text-align:center;top:225px;font-size:12px;line-height:12px">中心</div><div class="c" style="left:210px;width:69px;top:226px">182<i>.</i>6565</div><div class="c" style="left:278px;width:69px;top:226px">368<i>.</i>7874</div><div class="c" style="left:346px;width:69px;top:226px"><i>-</i>77<i>.</i>5362</div><div class="c" style="left:414px;width:88px;top:226px">596163<i>.</i>1830</div><div class="c" style="left:501px;width:88px;top:226px">3953295<i>.</i>8470</div><div class="c" style="left:588px;width:69px;top:226px">1808<i>.</i>1337</div><div class="t" style="left:657px;width:59px;text-align:center;top:225px;font-size:12px;line-height:12px">是</div><div class="c" style="left:-1px;width:18px;top:246px;letter-spacing:-.5px">13</div><div class="c" style="left:22px;top:246px;text-align:left">042313</div><div class="t" style="left:115px;width:49px;text-align:center;top:245px;font-size:12px;line-height:12px">中心</div><div class="t" style="left:163px;width:49px;text-align:center;top:245px;font-size:12px;line-height:12px">中心</div><div class="c" style="left:210px;width:69px;top:246px">169<i>.</i>9951</div><div class="c" style="left:278px;width:69px;top:246px">349<i>.</i>6912</div><div class="c" style="left:346px;width:69px;top:246px"><i>-</i>74<i>.</i>3402</div><div class="c" style="left:414px;width:88px;top:246px">596140<i>.</i>0640</div><div class="c" style="left:501px;width:88px;top:246px">3953295<i>.</i>6370</div><div class="c" style="left:588px;width:69px;top:246px">1808<i>.</i>9870</div><div class="t" style="left:657px;width:59px;text-align:center;top:245px;font-size:12px;line-height:12px">是</div><div class="c" style="left:-1px;width:18px;top:266px;letter-spacing:-.5px">14</div><div class="c" style="left:22px;top:266px;text-align:left">042314</div><div class="t" style="left:115px;width:49px;text-align:center;top:265px;font-size:12px;line-height:12px">中心</div><div class="t" style="left:163px;width:49px;text-align:center;top:265px;font-size:12px;line-height:12px">中心</div><div class="c" style="left:210px;width:69px;top:266px">159<i>.</i>2769</div><div class="c" style="left:278px;width:69px;top:266px">330<i>.</i>1412</div><div class="c" style="left:346px;width:69px;top:266px"><i>-</i>70<i>.</i>9567</div><div class="c" style="left:414px;width:88px;top:266px">596117<i>.</i>6415</div><div class="c" style="left:501px;width:88px;top:266px">3953293<i>.</i>5410</div><div class="c" style="left:588px;width:69px;top:266px">1809<i>.</i>9487</div><div class="t" style="left:657px;width:59px;text-align:center;top:265px;font-size:12px;line-height:12px">是</div><div class="c" style="left:-1px;width:18px;top:286px;letter-spacing:-.5px">15</div><div class="c" style="left:22px;top:286px;text-align:left">042315</div><div class="t" style="left:115px;width:49px;text-align:center;top:285px;font-size:12px;line-height:12px">中心</div><div class="t" style="left:163px;width:49px;text-align:center;top:285px;font-size:12px;line-height:12px">中心</div><div class="c" style="left:210px;width:69px;top:286px">154<i>.</i>9322</div><div class="c" style="left:278px;width:69px;top:286px">304<i>.</i>1712</div><div class="c" style="left:346px;width:69px;top:286px"><i>-</i>65<i>.</i>8252</div><div class="c" style="left:414px;width:88px;top:286px">596093<i>.</i>2240</div><div class="c" style="left:501px;width:88px;top:286px">3953282<i>.</i>4390</div><div class="c" style="left:588px;width:69px;top:286px">1810<i>.</i>9160</div><div class="t" style="left:657px;width:59px;text-align:center;top:285px;font-size:12px;line-height:12px">是</div><div class="c" style="left:-1px;width:18px;top:306px;letter-spacing:-.5px">16</div><div class="c" style="left:22px;top:306px;text-align:left">042316</div><div class="t" style="left:115px;width:49px;text-align:center;top:305px;font-size:12px;line-height:12px">中心</div><div class="t" style="left:163px;width:49px;text-align:center;top:305px;font-size:12px;line-height:12px">中心</div><div class="c" style="left:210px;width:69px;top:306px">123<i>.</i>3951</div><div class="c" style="left:278px;width:69px;top:306px">294<i>.</i>7583</div><div class="c" style="left:346px;width:69px;top:306px"><i>-</i>63<i>.</i>8795</div><div class="c" style="left:414px;width:88px;top:306px">596067<i>.</i>8478</div><div class="c" style="left:501px;width:88px;top:306px">3953303<i>.</i>3670</div><div class="c" style="left:588px;width:69px;top:306px">1813<i>.</i>8837</div><div class="t" style="left:657px;width:59px;text-align:center;top:305px;font-size:12px;line-height:12px">是</div><div class="c" style="left:-1px;width:18px;top:326px;letter-spacing:-.5px">17</div><div class="c" style="left:22px;top:326px;text-align:left">042317</div><div class="t" style="left:115px;width:49px;text-align:center;top:325px;font-size:12px;line-height:12px">中心</div><div class="t" style="left:163px;width:49px;text-align:center;top:325px;font-size:12px;line-height:12px">中心</div><div class="c" style="left:210px;width:69px;top:326px">114<i>.</i>2028</div><div class="c" style="left:278px;width:69px;top:326px">261<i>.</i>0804</div><div class="c" style="left:346px;width:69px;top:326px"><i>-</i>59<i>.</i>3195</div><div class="c" style="left:414px;width:88px;top:326px">596034<i>.</i>4330</div><div class="c" style="left:501px;width:88px;top:326px">3953292<i>.</i>3680</div><div class="c" style="left:588px;width:69px;top:326px">1813<i>.</i>3430</div><div class="t" style="left:657px;width:59px;text-align:center;top:325px;font-size:12px;line-height:12px">是</div><div class="c" style="left:-1px;width:18px;top:346px;letter-spacing:-.5px">18</div><div class="c" style="left:22px;top:346px;text-align:left">042318</div><div class="t" style="left:115px;width:49px;text-align:center;top:345px;font-size:12px;line-height:12px">中心</div><div class="t" style="left:163px;width:49px;text-align:center;top:345px;font-size:12px;line-height:12px">中心</div><div class="c" style="left:210px;width:69px;top:346px">84<i>.</i>7156</div><div class="c" style="left:278px;width:69px;top:346px">241<i>.</i>2592</div><div class="c" style="left:346px;width:69px;top:346px"><i>-</i>57<i>.</i>7273</div><div class="c" style="left:414px;width:88px;top:346px">596001<i>.</i>5796</div><div class="c" style="left:501px;width:88px;top:346px">3953306<i>.</i>0340</div><div class="c" style="left:588px;width:69px;top:346px">1814<i>.</i>1336</div><div class="t" style="left:657px;width:59px;text-align:center;top:345px;font-size:12px;line-height:12px">是</div><div class="c" style="left:-1px;width:18px;top:366px;letter-spacing:-.5px">19</div><div class="c" style="left:22px;top:366px;text-align:left">042319</div><div class="t" style="left:115px;width:49px;text-align:center;top:365px;font-size:12px;line-height:12px">中心</div><div class="t" style="left:163px;width:49px;text-align:center;top:365px;font-size:12px;line-height:12px">中心</div><div class="c" style="left:210px;width:69px;top:366px">56<i>.</i>6018</div><div class="c" style="left:278px;width:69px;top:366px">233<i>.</i>7986</div><div class="c" style="left:346px;width:69px;top:366px"><i>-</i>57<i>.</i>2197</div><div class="c" style="left:414px;width:88px;top:366px">595979<i>.</i>8320</div><div class="c" style="left:501px;width:88px;top:366px">3953325<i>.</i>2770</div><div class="c" style="left:588px;width:69px;top:366px">1815<i>.</i>5260</div><div class="t" style="left:657px;width:59px;text-align:center;top:365px;font-size:12px;line-height:12px">是</div><div class="c" style="left:-1px;width:18px;top:386px;letter-spacing:-.5px">20</div><div class="c" style="left:22px;top:386px;text-align:left">042320</div><div class="t" style="left:115px;width:49px;text-align:center;top:385px;font-size:12px;line-height:12px">中心</div><div class="t" style="left:163px;width:49px;text-align:center;top:385px;font-size:12px;line-height:12px">中心</div><div class="c" style="left:210px;width:69px;top:386px">22<i>.</i>6341</div><div class="c" style="left:278px;width:69px;top:386px">223<i>.</i>6883</div><div class="c" style="left:346px;width:69px;top:386px"><i>-</i>57<i>.</i>9777</div><div class="c" style="left:414px;width:88px;top:386px">595952<i>.</i>8200</div><div class="c" style="left:501px;width:88px;top:386px">3953348<i>.</i>3020</div><div class="c" style="left:588px;width:69px;top:386px">1816<i>.</i>0296</div><div class="t" style="left:657px;width:59px;text-align:center;top:385px;font-size:12px;line-height:12px">是</div><div class="c" style="left:-1px;width:18px;top:406px;letter-spacing:-.5px">21</div><div class="c" style="left:22px;top:406px;text-align:left">042321</div><div class="t" style="left:115px;width:49px;text-align:center;top:405px;font-size:12px;line-height:12px">中心</div><div class="t" style="left:163px;width:49px;text-align:center;top:405px;font-size:12px;line-height:12px">中心</div><div class="c" style="left:210px;width:69px;top:406px"><i>-</i>11<i>.</i>2750</div><div class="c" style="left:278px;width:69px;top:406px">204<i>.</i>9590</div><div class="c" style="left:346px;width:69px;top:406px"><i>-</i>56<i>.</i>4062</div><div class="c" style="left:414px;width:88px;top:406px">595918<i>.</i>4220</div><div class="c" style="left:501px;width:88px;top:406px">3953366<i>.</i>2500</div><div class="c" style="left:588px;width:69px;top:406px">1817<i>.</i>0900</div><div class="t" style="left:657px;width:59px;text-align:center;top:405px;font-size:12px;line-height:12px">是</div></div><div class="sbtrack" style="left:1350px;top:308px;width:17px;height:430px"></div><div style="left:1354px;top:315px;border-left:4px solid transparent;border-right:4px solid transparent;border-bottom:4px solid #404040"></div><div style="left:1354px;top:727px;border-left:4px solid transparent;border-right:4px solid transparent;border-top:4px solid #404040"></div><div class="thumb" style="left:1350px;top:327px;width:15px;height:166px"></div><div class="gripm" style="left:1354px;top:405px"></div><div class="gripm" style="left:1354px;top:408px"></div><div class="gripm" style="left:1354px;top:411px"></div><div style="left:1211px;top:745px;width:75px;height:26px;border:2px solid #6e6e6e;background:#f0f0f0"></div><div style="left:1215px;top:749px;width:67px;height:18px;border:1px dotted #000"></div><div class="t" style="left:1211px;width:75px;text-align:center;top:752px;font-size:12px;line-height:12px">计算</div><div style="left:1292px;top:745px;width:75px;height:26px;border:1px solid #707070;background:linear-gradient(180deg,#f4f4f4,#ececec)"></div><div class="t" style="left:1292px;width:75px;text-align:center;top:752px;font-size:12px;line-height:12px">退出</div></body></html>
